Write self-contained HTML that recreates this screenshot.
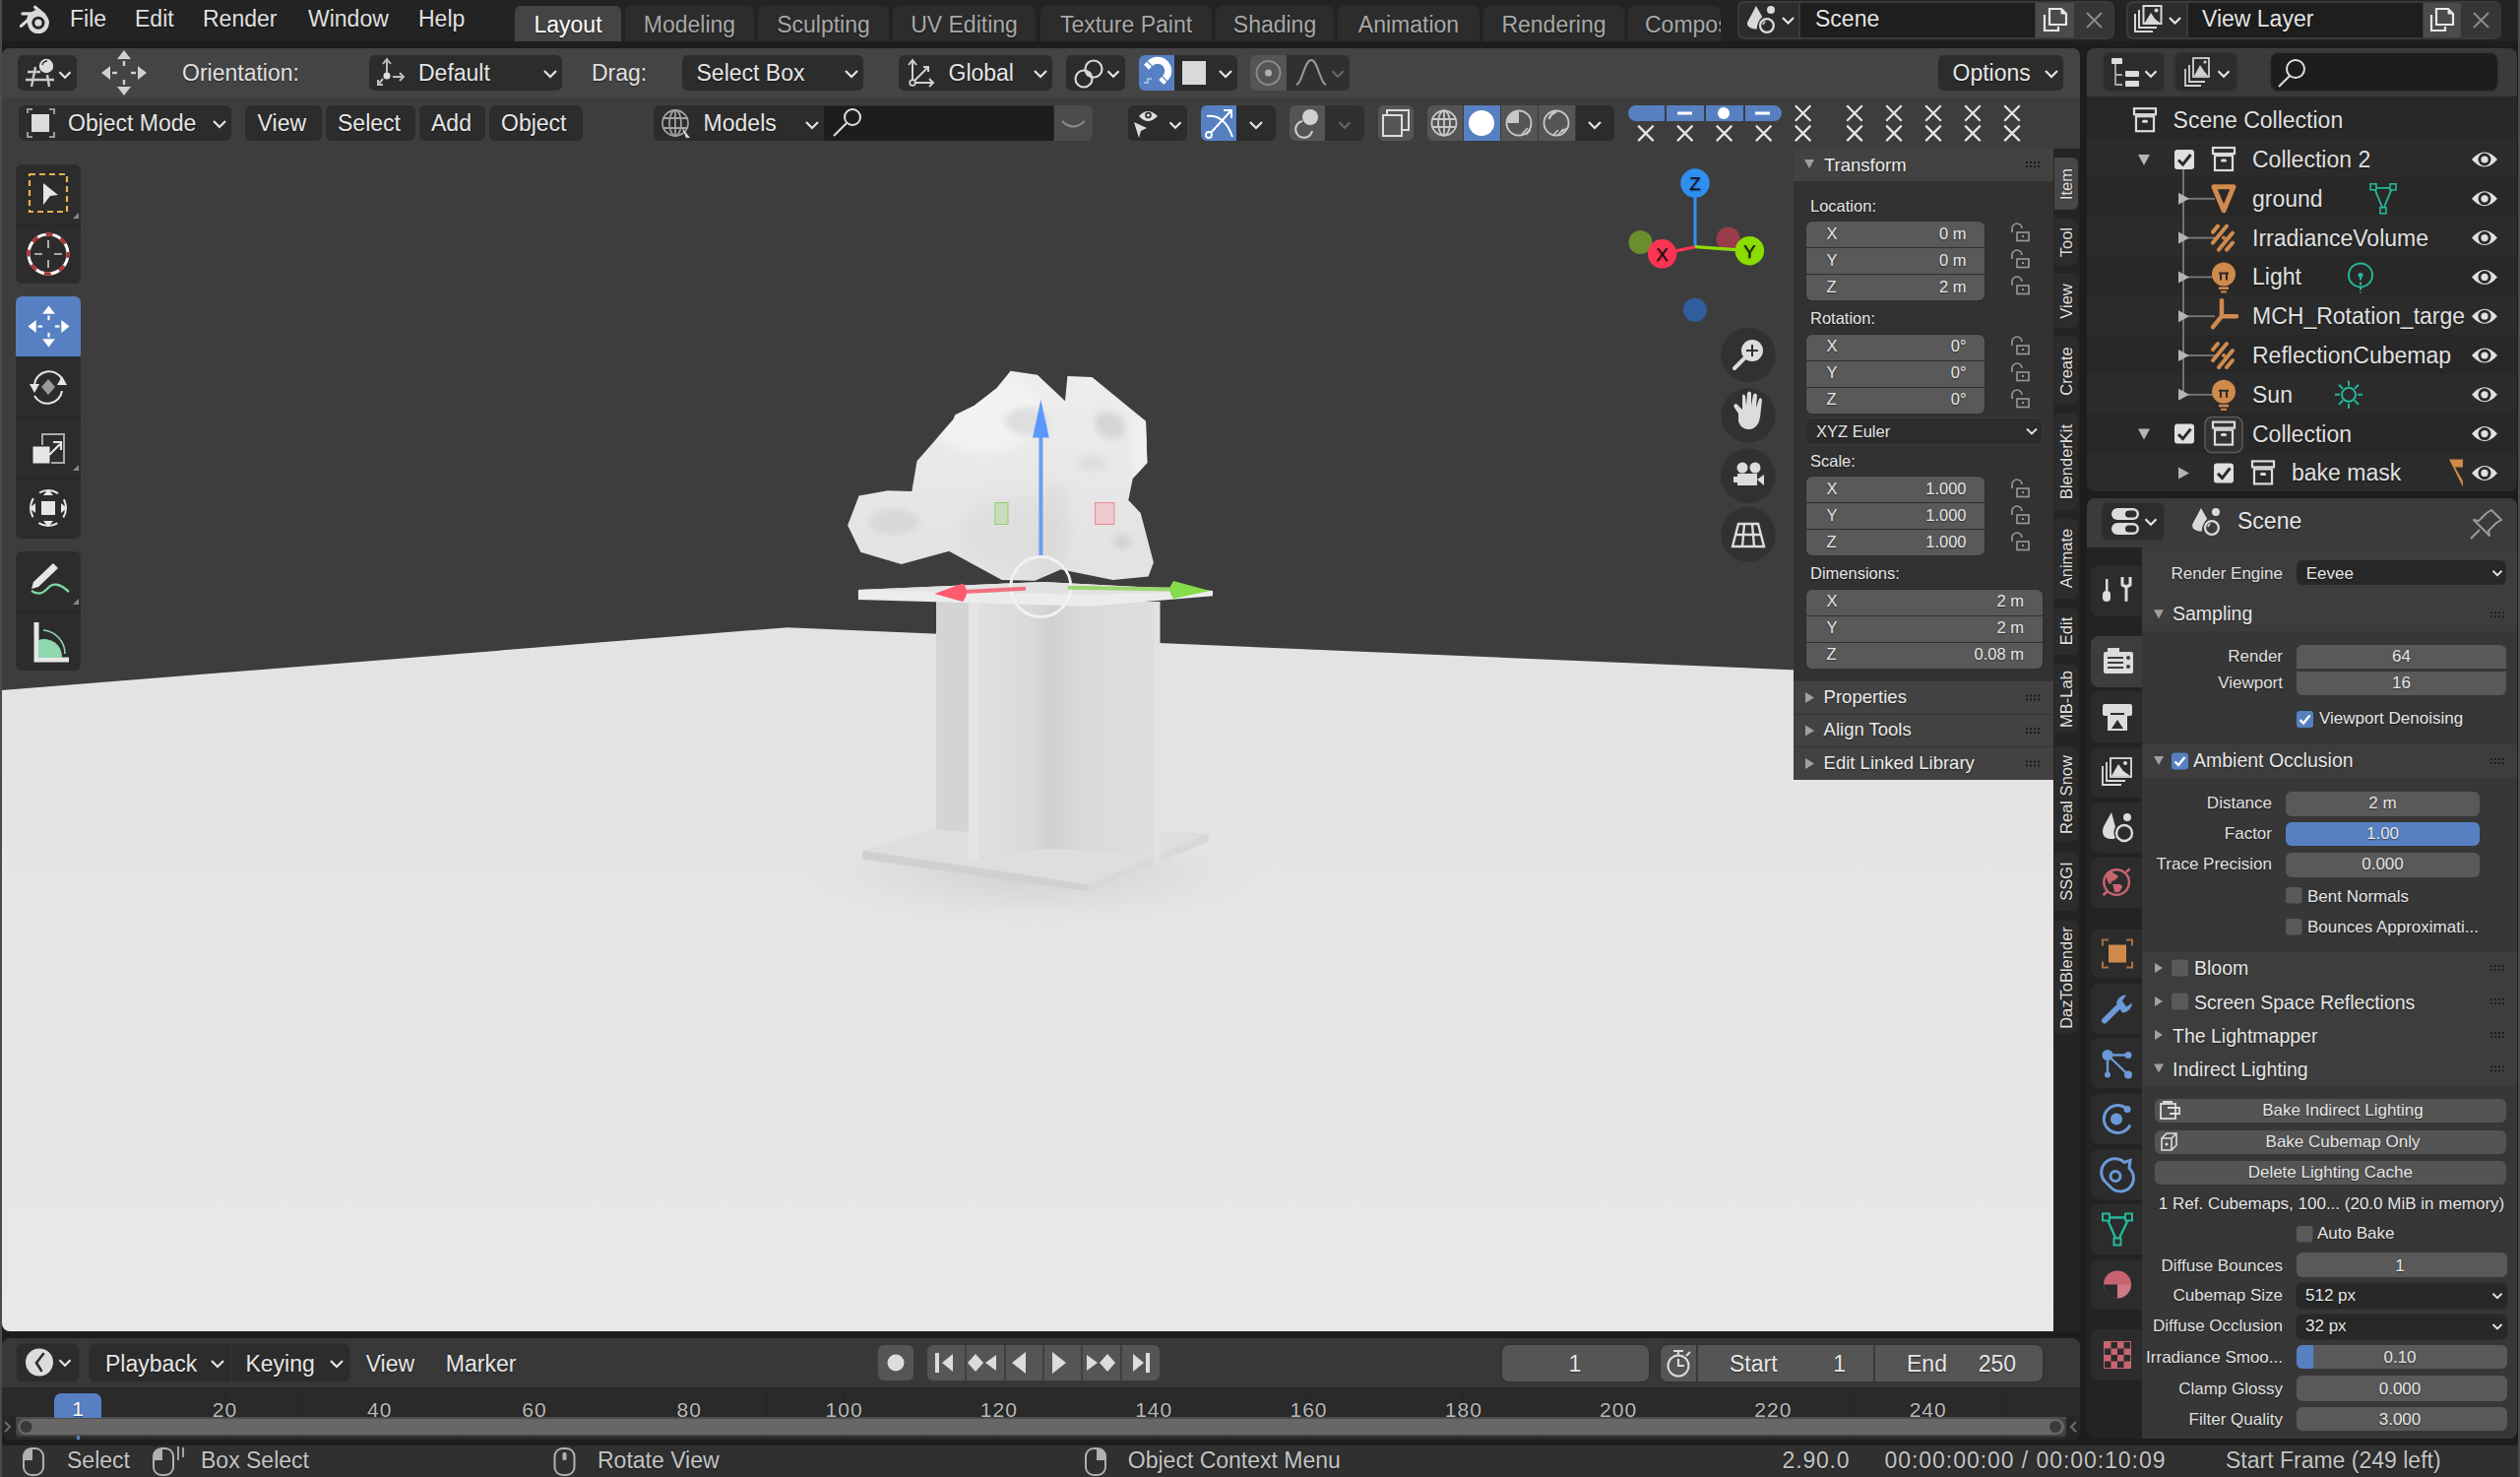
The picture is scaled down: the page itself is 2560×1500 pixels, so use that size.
<!DOCTYPE html>
<html><head><meta charset="utf-8">
<style>
*{box-sizing:border-box;margin:0;padding:0}
html,body{width:2560px;height:1500px;overflow:hidden;background:#1d1d1d;font-family:"Liberation Sans",sans-serif;color:#e6e6e6;position:relative}
.a{position:absolute}
.t{position:absolute;white-space:nowrap;line-height:1;text-shadow:0 1px 1.5px rgba(0,0,0,0.5)}
.area{position:absolute;overflow:hidden;border-radius:8px}
svg.a{overflow:visible}
</style></head><body>

<div class="a" style="left:0.0px;top:0.0px;width:2.0px;height:1500.0px;background:#4b4b4b;"></div>
<div class="a" style="left:2558.0px;top:0.0px;width:2.0px;height:1500.0px;background:#4b4b4b;"></div>
<div class="a" style="left:2.0px;top:0.0px;width:2556.0px;height:42.0px;background:#232323;"></div>
<svg class="a" style="left:0.0px;top:0.0px;" width="60" height="42" viewBox="0 0 60 42"><polygon points="29,14 37,9.5 47,16 50,23 39,23 28,24.5 27,19" fill="#d9d9d9"/><circle cx="38.9" cy="23.2" r="10.9" fill="#d9d9d9"/><circle cx="38.9" cy="23.2" r="6.5" fill="#232323"/><circle cx="38.9" cy="23.2" r="3.6" fill="#d9d9d9"/><line x1="35.6" y1="7.3" x2="45" y2="15" stroke="#d9d9d9" stroke-width="3.2" stroke-linecap="round"/><line x1="22.9" y1="13.9" x2="36" y2="13.9" stroke="#d9d9d9" stroke-width="3.2" stroke-linecap="round"/><line x1="21.4" y1="26.4" x2="30.5" y2="18.5" stroke="#d9d9d9" stroke-width="3.2" stroke-linecap="round"/></svg>
<div class="t" style="top:8.0px;font-size:23px;color:#e0e0e0;left:71.0px;">File</div>
<div class="t" style="top:8.0px;font-size:23px;color:#e0e0e0;left:137.0px;">Edit</div>
<div class="t" style="top:8.0px;font-size:23px;color:#e0e0e0;left:206.0px;">Render</div>
<div class="t" style="top:8.0px;font-size:23px;color:#e0e0e0;left:313.0px;">Window</div>
<div class="t" style="top:8.0px;font-size:23px;color:#e0e0e0;left:425.0px;">Help</div>
<div class="a" style="left:523.0px;top:6.0px;width:108.0px;height:36.0px;background:#444444;border-radius:6px 6px 0 0;"></div>
<div class="t" style="top:14.0px;font-size:23px;color:#ffffff;left:577.0px;transform:translateX(-50%);">Layout</div>
<div class="a" style="left:635.0px;top:6.0px;width:131.0px;height:36.0px;background:#2c2c2c;border-radius:6px 6px 0 0;"></div>
<div class="t" style="top:14.0px;font-size:23px;color:#a8a8a8;left:700.5px;transform:translateX(-50%);">Modeling</div>
<div class="a" style="left:770.0px;top:6.0px;width:133.0px;height:36.0px;background:#2c2c2c;border-radius:6px 6px 0 0;"></div>
<div class="t" style="top:14.0px;font-size:23px;color:#a8a8a8;left:836.5px;transform:translateX(-50%);">Sculpting</div>
<div class="a" style="left:907.0px;top:6.0px;width:145.0px;height:36.0px;background:#2c2c2c;border-radius:6px 6px 0 0;"></div>
<div class="t" style="top:14.0px;font-size:23px;color:#a8a8a8;left:979.5px;transform:translateX(-50%);">UV Editing</div>
<div class="a" style="left:1057.0px;top:6.0px;width:174.0px;height:36.0px;background:#2c2c2c;border-radius:6px 6px 0 0;"></div>
<div class="t" style="top:14.0px;font-size:23px;color:#a8a8a8;left:1144.0px;transform:translateX(-50%);">Texture Paint</div>
<div class="a" style="left:1235.0px;top:6.0px;width:120.0px;height:36.0px;background:#2c2c2c;border-radius:6px 6px 0 0;"></div>
<div class="t" style="top:14.0px;font-size:23px;color:#a8a8a8;left:1295.0px;transform:translateX(-50%);">Shading</div>
<div class="a" style="left:1359.0px;top:6.0px;width:144.0px;height:36.0px;background:#2c2c2c;border-radius:6px 6px 0 0;"></div>
<div class="t" style="top:14.0px;font-size:23px;color:#a8a8a8;left:1431.0px;transform:translateX(-50%);">Animation</div>
<div class="a" style="left:1507.0px;top:6.0px;width:143.0px;height:36.0px;background:#2c2c2c;border-radius:6px 6px 0 0;"></div>
<div class="t" style="top:14.0px;font-size:23px;color:#a8a8a8;left:1578.5px;transform:translateX(-50%);">Rendering</div>
<div class="a" style="left:1654.0px;top:6.0px;width:94.0px;height:36.0px;background:#2c2c2c;border-radius:6px 6px 0 0;"></div>
<div class="a" style="left:1654px;top:6px;width:94px;height:36px;overflow:hidden">
<div class="t" style="top:8.0px;font-size:23px;color:#a8a8a8;left:17.0px;">Compositing</div>
</div>
<div class="a" style="left:1765.0px;top:1.0px;width:383.0px;height:38.5px;background:#3a3a3a;border-radius:7px;"></div>
<div class="a" style="left:1766.5px;top:2.5px;width:60.5px;height:35.5px;background:#2c2c2c;border-radius:6px 0 0 6px;"></div>
<div class="a" style="left:1829.0px;top:2.5px;width:238.0px;height:35.5px;background:#1e1e1e;"></div>
<div class="a" style="left:2068.0px;top:2.5px;width:39.0px;height:35.5px;background:#4b4b4b;"></div>
<div class="a" style="left:2107.0px;top:2.5px;width:39.5px;height:35.5px;background:#363636;border-radius:0 6px 6px 0;"></div>
<svg class="a" style="left:1775.0px;top:6.0px;" width="28" height="28" viewBox="0 0 28 28"><path d="M9,0 L15.2,11 Q10.2,16 9.6,23.8 Q3.5,23.6 0.8,20.5 Q-0.6,18.5 0.4,16 Z" fill="#d9d9d9"/><circle cx="24" cy="4" r="4" fill="#d9d9d9"/><circle cx="19.9" cy="20" r="6.9" fill="none" stroke="#d9d9d9" stroke-width="2.3"/><path d="M16,19 Q16.5,16.5 18.5,16" stroke="#d9d9d9" stroke-width="1.6" fill="none"/></svg>
<svg class="a" style="left:1808.5px;top:16.2px;" width="15" height="9.5" viewBox="0 0 15 9.5"><polyline points="2,2 7.5,7.5 13,2" fill="none" stroke="#e6e6e6" stroke-width="2.2"/></svg>
<div class="t" style="top:7.5px;font-size:23px;color:#e6e6e6;left:1844.0px;">Scene</div>
<svg class="a" style="left:2075.0px;top:7.0px;" width="26" height="26" viewBox="0 0 26 26"><path d="M2,8 L2,24 L16,24 L16,20" fill="none" stroke="#e6e6e6" stroke-width="2.2"/><path d="M7,2 L19,2 L24,7 L24,18 L7,18 Z" fill="none" stroke="#e6e6e6" stroke-width="2.2"/><path d="M19,2 L19,7 L24,7" fill="#e6e6e6" stroke="#e6e6e6" stroke-width="1"/></svg>
<svg class="a" style="left:2119.5px;top:12.5px;" width="15" height="15" viewBox="0 0 15 15"><path d="M0,0 L15,15 M15,0 L0,15" stroke="#8a8a8a" stroke-width="2"/></svg>
<div class="a" style="left:2160.0px;top:1.0px;width:381.0px;height:38.5px;background:#3a3a3a;border-radius:7px;"></div>
<div class="a" style="left:2161.5px;top:2.5px;width:59.5px;height:35.5px;background:#2c2c2c;border-radius:6px 0 0 6px;"></div>
<div class="a" style="left:2223.0px;top:2.5px;width:238.0px;height:35.5px;background:#1e1e1e;"></div>
<div class="a" style="left:2462.0px;top:2.5px;width:38.0px;height:35.5px;background:#4b4b4b;"></div>
<div class="a" style="left:2500.0px;top:2.5px;width:39.5px;height:35.5px;background:#363636;border-radius:0 6px 6px 0;"></div>
<svg class="a" style="left:2168.0px;top:5.0px;" width="30" height="30" viewBox="0 0 30 30"><path d="M1,9 L1,27 L19,27" fill="none" stroke="#d9d9d9" stroke-width="2"/><path d="M5,5 L5,23 L23,23" fill="none" stroke="#d9d9d9" stroke-width="2"/><rect x="9.5" y="1" width="18" height="18" fill="none" stroke="#d9d9d9" stroke-width="2"/><path d="M11,18 L17,8 L21,14 L26,18 Z" fill="#d9d9d9"/><circle cx="22.5" cy="5.5" r="2" fill="#d9d9d9"/></svg>
<svg class="a" style="left:2201.5px;top:16.2px;" width="15" height="9.5" viewBox="0 0 15 9.5"><polyline points="2,2 7.5,7.5 13,2" fill="none" stroke="#e6e6e6" stroke-width="2.2"/></svg>
<div class="t" style="top:7.5px;font-size:23px;color:#e6e6e6;left:2237.0px;">View Layer</div>
<svg class="a" style="left:2468.0px;top:7.0px;" width="26" height="26" viewBox="0 0 26 26"><path d="M2,8 L2,24 L16,24 L16,20" fill="none" stroke="#e6e6e6" stroke-width="2.2"/><path d="M7,2 L19,2 L24,7 L24,18 L7,18 Z" fill="none" stroke="#e6e6e6" stroke-width="2.2"/><path d="M19,2 L19,7 L24,7" fill="#e6e6e6" stroke="#e6e6e6" stroke-width="1"/></svg>
<svg class="a" style="left:2512.5px;top:12.5px;" width="15" height="15" viewBox="0 0 15 15"><path d="M0,0 L15,15 M15,0 L0,15" stroke="#8a8a8a" stroke-width="2"/></svg>
<div class="area" style="left:2px;top:49px;width:2111px;height:1303px;background:#3d3d3d">
<svg class="a" style="left:-2px;top:-49px" width="2560" height="1500" viewBox="0 0 2560 1500">
<defs><linearGradient id="floorg" x1="0" y1="0" x2="0" y2="1"><stop offset="0" stop-color="#e3e3e3"/><stop offset="1" stop-color="#e8e8e8"/></linearGradient><linearGradient id="headg" x1="0" y1="0" x2="0" y2="1"><stop offset="0" stop-color="#eeeeee"/><stop offset="0.55" stop-color="#e7e7e7"/><stop offset="1" stop-color="#e2e2e2"/></linearGradient><linearGradient id="colg" x1="0" y1="0" x2="1" y2="0"><stop offset="0" stop-color="#dcdcdc"/><stop offset="0.3" stop-color="#e6e6e6"/><stop offset="1" stop-color="#e3e3e3"/></linearGradient><radialGradient id="shadowg" cx="0.5" cy="0.5" r="0.5"><stop offset="0" stop-color="#cfcfcf"/><stop offset="0.6" stop-color="#dcdcdc" stop-opacity="0.6"/><stop offset="1" stop-color="#e6e6e6" stop-opacity="0"/></radialGradient></defs>
<polygon points="0,701.2 800,637.2 2120,692.9 2120,1360 0,1360" fill="url(#floorg)"/>
<ellipse cx="1050" cy="885" rx="250" ry="60" fill="url(#shadowg)"/>
<polygon points="876.4,863.7 952.8,840.3 1227.7,845.9 1105.9,898.4" fill="#dedede"/>
<polygon points="876.4,863.7 1105.9,898.4 1105.9,905.0 876.4,872.7" fill="#d0d0d0"/>
<polygon points="1105.9,898.4 1227.7,845.9 1227.7,854.8 1105.9,905.0" fill="#d8d8d8"/>
<defs><linearGradient id="midg" x1="0" y1="0" x2="1" y2="0"><stop offset="0" stop-color="#e0e0e0"/><stop offset="0.75" stop-color="#d9d9d9"/><stop offset="1" stop-color="#d0d0d0"/></linearGradient><linearGradient id="rightg" x1="0" y1="0" x2="1" y2="0"><stop offset="0" stop-color="#d0d0d0"/><stop offset="0.3" stop-color="#dadada"/><stop offset="1" stop-color="#dedede"/></linearGradient></defs>
<polygon points="951.0,611.0 985.2,611.0 985.2,845.0 951.0,842.5" fill="#d4d4d4"/>
<polygon points="1066.8,611.0 1174.0,611.0 1174.0,867.0 1066.8,862.0" fill="url(#rightg)"/>
<polygon points="994.0,612.0 1068.0,612.0 1068.0,862.0 994.0,866.0" fill="url(#midg)"/>
<polygon points="984.0,612.0 994.0,612.0 994.0,873.8 984.0,872.0" fill="#e4e4e4"/>
<polygon points="1171.8,611.0 1178.5,611.0 1178.5,878.0 1171.8,876.0" fill="#e2e2e2"/>
<polygon points="871.9,599.0 1060.0,591.0 1232.0,600.0 1232.0,605.2 1107.0,615.7 871.9,609.0" fill="#ececec"/>
<polygon points="871.9,599.0 1060.0,591.0 1232.0,600.0 1107.0,604.0" fill="#e2e2e2"/>
<polygon points="1026.6,376.7 1053.9,380.8 1082.0,407.2 1084.4,382.0 1109.4,382.9 1164.0,427.8 1165.4,470.0 1150.7,485.9 1146.3,507.9 1158.7,521.0 1171.9,571.3 1166.6,585.4 1130.5,588.9 1077.7,578.3 1051.3,589.8 1017.8,588.9 964.1,559.8 915.7,573.0 874.3,560.7 861.1,533.4 872.6,503.5 901.6,498.2 926.3,499.1 931.5,468.3 968.5,426.0 970.3,421.6 989.6,411.9 1012.5,394.3" fill="url(#headg)"/>
<defs><filter id="bl6" x="-50%" y="-50%" width="200%" height="200%"><feGaussianBlur stdDeviation="6"/></filter><filter id="bl3" x="-50%" y="-50%" width="200%" height="200%"><feGaussianBlur stdDeviation="3"/></filter><clipPath id="headclip"><polygon points="1026.6,376.7 1053.9,380.8 1082.0,407.2 1084.4,382.0 1109.4,382.9 1164.0,427.8 1165.4,470.0 1150.7,485.9 1146.3,507.9 1158.7,521.0 1171.9,571.3 1166.6,585.4 1130.5,588.9 1077.7,578.3 1051.3,589.8 1017.8,588.9 964.1,559.8 915.7,573.0 874.3,560.7 861.1,533.4 872.6,503.5 901.6,498.2 926.3,499.1 931.5,468.3 968.5,426.0 970.3,421.6 989.6,411.9 1012.5,394.3"/></clipPath></defs>
<g clip-path="url(#headclip)">
<ellipse cx="1000" cy="420" rx="60" ry="40" fill="#f2f2f2" filter="url(#bl6)"/>
<ellipse cx="1030" cy="540" rx="55" ry="35" fill="#dadada" filter="url(#bl6)" opacity="0.5"/>
<ellipse cx="908" cy="530" rx="26" ry="13" fill="#d8d8d8" filter="url(#bl3)"/>
<ellipse cx="1044" cy="428" rx="23" ry="14" fill="#dedede" filter="url(#bl3)"/>
<ellipse cx="1128" cy="432" rx="17" ry="13" transform="rotate(30 1128 432)" fill="#d6d6d6" filter="url(#bl3)"/>
<ellipse cx="1140" cy="550" rx="9" ry="7" fill="#d0d0d0" filter="url(#bl3)"/>
<path d="M1062,490 L1085,500 L1082,590 L1050,590 Z" fill="#d8d8d8" filter="url(#bl6)" opacity="0.6"/>
<ellipse cx="1110" cy="470" rx="15" ry="8" fill="#dedede" filter="url(#bl3)"/>
<path d="M1150,420 L1170,430 L1170,480 L1150,490 Z" fill="#f0f0f0" filter="url(#bl3)"/>
</g>
<rect x="1010.8" y="510.5" width="13.2" height="22" fill="#b8dca0" fill-opacity="0.6" stroke="#8fd06a" stroke-width="1"/>
<rect x="1112.5" y="510.5" width="19.4" height="22" fill="#f0b8bc" fill-opacity="0.6" stroke="#f08a95" stroke-width="1"/>
<line x1="1057.4" y1="444" x2="1057.4" y2="565" stroke="#6f9cf0" stroke-width="4"/>
<polygon points="1057.4,406 1065.8,444.5 1049,444.5" fill="#5a97ff"/>
<circle cx="1057.3" cy="596" r="30.5" fill="none" stroke="#f2f2f2" stroke-width="2.8"/>
<line x1="1041.9" y1="597.7" x2="975" y2="601.2" stroke="#f0707c" stroke-width="4"/>
<path d="M949.2,603 L978,592.4 Q986,601 978,610.9 Z" fill="#ff5a6e"/>
<line x1="1084.7" y1="596.8" x2="1195" y2="598.4" stroke="#9ad870" stroke-width="4"/>
<path d="M1229,600 L1192,590 Q1185,599 1192,608 Z" fill="#86dc4a"/>
</svg>
</div>
<div class="a" style="left:2px;top:49px;width:2111px;height:49.5px;background:#444444;border-radius:8px 8px 0 0"></div>
<div class="a" style="left:18.0px;top:56.0px;width:60.0px;height:36.0px;background:#2c2c2c;border-radius:6px;"></div>
<svg class="a" style="left:0;top:0;pointer-events:none" width="2560" height="1500"><g stroke="#c8c8c8" stroke-width="2.4" fill="none"><path d="M28,73 L41,73 M26,81 L55,81 M36,68 L32,88 M48,76 L50,88"/></g><circle cx="47" cy="67" r="7.2" fill="#dcdcdc"/><path d="M43,66 Q44,62 48,62" stroke="#2c2c2c" stroke-width="1.4" fill="none"/><polyline points="60.5,73.25 66,78.75 71.5,73.25" fill="none" stroke="#e6e6e6" stroke-width="2.2"/></svg>
<svg class="a" style="left:0;top:0" width="2560" height="1500"><polygon points="126,51.0 133.0,60.0 119.0,60.0" fill="#d0d0d0"/><polygon points="126,97.0 133.0,88.0 119.0,88.0" fill="#d0d0d0"/><polygon points="103.0,74 112.0,67.0 112.0,81.0" fill="#d0d0d0"/><polygon points="149.0,74 140.0,67.0 140.0,81.0" fill="#d0d0d0"/><rect x="124.8" y="62.0" width="2.4" height="5.0" fill="#d0d0d0"/><rect x="124.8" y="81.0" width="2.4" height="5.0" fill="#d0d0d0"/><rect x="114.0" y="72.8" width="5.0" height="2.4" fill="#d0d0d0"/><rect x="133.0" y="72.8" width="5.0" height="2.4" fill="#d0d0d0"/></svg>
<div class="t" style="top:62.5px;font-size:23px;color:#e0e0e0;left:185.0px;">Orientation:</div>
<div class="a" style="left:375.0px;top:56.0px;width:196.0px;height:35.5px;background:#2c2c2c;border-radius:6px;"></div>
<div class="t" style="top:62.5px;font-size:23px;color:#e6e6e6;left:425.0px;">Default</div>
<div class="t" style="top:62.5px;font-size:23px;color:#e0e0e0;left:601.0px;">Drag:</div>
<div class="a" style="left:693.0px;top:56.0px;width:184.0px;height:35.5px;background:#2c2c2c;border-radius:6px;"></div>
<div class="t" style="top:62.5px;font-size:23px;color:#e6e6e6;left:707.5px;">Select Box</div>
<div class="a" style="left:913.0px;top:56.0px;width:156.0px;height:35.5px;background:#2c2c2c;border-radius:6px;"></div>
<div class="t" style="top:62.5px;font-size:23px;color:#e6e6e6;left:963.5px;">Global</div>
<div class="a" style="left:1083.0px;top:56.0px;width:60.0px;height:35.5px;background:#2c2c2c;border-radius:6px;"></div>
<div class="a" style="left:1157.0px;top:56.0px;width:100.0px;height:35.5px;background:#2c2c2c;border-radius:6px;"></div>
<div class="a" style="left:1157.0px;top:56.0px;width:36.0px;height:35.5px;background:#5680c2;border-radius:6px 0 0 6px;"></div>
<div class="a" style="left:1201.0px;top:62.0px;width:24.0px;height:24.0px;background:#d9d9d9;"></div>
<div class="a" style="left:1270.0px;top:56.0px;width:101.0px;height:35.5px;background:#303030;border-radius:6px;"></div>
<div class="a" style="left:1270.0px;top:56.0px;width:37.0px;height:35.5px;background:#555555;border-radius:6px 0 0 6px;"></div>
<div class="a" style="left:1969.0px;top:56.0px;width:127.0px;height:35.5px;background:#2c2c2c;border-radius:6px;"></div>
<div class="t" style="top:62.5px;font-size:23px;color:#e6e6e6;left:1983.5px;">Options</div>
<svg class="a" style="left:0;top:0;pointer-events:none" width="2560" height="1500"><g stroke="#bdbdbd" stroke-width="2" fill="none"><path d="M393,76 L393,61 M389,65 L393,60 L397,65 M399,78 L410,78 M406,74 L410,78 L406,82 M389,80 L384,86 M384,81 L384,86 L389,86"/></g><circle cx="393" cy="77" r="3.5" fill="#e0e0e0"/><polyline points="553.0,72.0 559,78.0 565.0,72.0" fill="none" stroke="#e6e6e6" stroke-width="2.2"/><polyline points="859.0,72.0 865,78.0 871.0,72.0" fill="none" stroke="#e6e6e6" stroke-width="2.2"/><g stroke="#d0d0d0" stroke-width="2" fill="none"><path d="M927,84 L927,62 M923,66 L927,61 L931,66 M927,84 L948,84 M944,80 L948,84 L944,88 M929,82 L943,68 M938,68 L943,68 L943,73"/></g><circle cx="927" cy="84" r="2.8" fill="#2c2c2c" stroke="#d0d0d0" stroke-width="1.8"/><polyline points="1051.0,72.0 1057,78.0 1063.0,72.0" fill="none" stroke="#e6e6e6" stroke-width="2.2"/><circle cx="1101" cy="80" r="8.5" fill="none" stroke="#d8d8d8" stroke-width="2.2"/><circle cx="1111" cy="70" r="8.5" fill="none" stroke="#d8d8d8" stroke-width="2.2"/><circle cx="1106" cy="75" r="2.6" fill="#d8d8d8"/><polyline points="1125.5,72.25 1131,77.75 1136.5,72.25" fill="none" stroke="#e6e6e6" stroke-width="2.2"/><path d="M1168.4,64.4 A10.5,10.5 0 0 1 1183.6,79.6" stroke="#ffffff" stroke-width="7" fill="none"/><path d="M1168.4,64.4 L1164.5,68.3 M1183.6,79.6 L1179.7,83.5" stroke="#ffffff" stroke-width="7" stroke-dasharray="0.1,1.2,20"/><path d="M1162,84 L1166,84 L1166,80 L1170,80" stroke="#b8c8e8" stroke-width="1.6" fill="none"/><polyline points="1239.0,72.0 1245,78.0 1251.0,72.0" fill="none" stroke="#e6e6e6" stroke-width="2.2"/><circle cx="1288.5" cy="74" r="12" fill="none" stroke="#8a8a8a" stroke-width="2"/><circle cx="1288.5" cy="74" r="3.5" fill="#b0b0b0"/><path d="M1317,86 C1323,85 1325,61 1332,61 C1339,61 1341,85 1347,86" stroke="#9a9a9a" stroke-width="2" fill="none"/><polyline points="1353.5,72.25 1359,77.75 1364.5,72.25" fill="none" stroke="#6a6a6a" stroke-width="2.2"/><polyline points="2078.0,72.0 2084,78.0 2090.0,72.0" fill="none" stroke="#e6e6e6" stroke-width="2.2"/></svg>
<div class="a" style="left:19.0px;top:107.0px;width:216.0px;height:36.0px;background:#2c2c2c;border-radius:6px;"></div>
<div class="t" style="top:113.5px;font-size:23px;color:#e6e6e6;left:69.0px;">Object Mode</div>
<div class="a" style="left:249.0px;top:107.0px;width:78.0px;height:36.0px;background:#2c2c2c;border-radius:6px;"></div>
<div class="t" style="top:113.5px;font-size:23px;color:#e6e6e6;left:261.6px;">View</div>
<div class="a" style="left:331.0px;top:107.0px;width:91.0px;height:36.0px;background:#2c2c2c;border-radius:6px;"></div>
<div class="t" style="top:113.5px;font-size:23px;color:#e6e6e6;left:343.0px;">Select</div>
<div class="a" style="left:426.0px;top:107.0px;width:67.0px;height:36.0px;background:#2c2c2c;border-radius:6px;"></div>
<div class="t" style="top:113.5px;font-size:23px;color:#e6e6e6;left:438.0px;">Add</div>
<div class="a" style="left:497.0px;top:107.0px;width:95.0px;height:36.0px;background:#2c2c2c;border-radius:6px;"></div>
<div class="t" style="top:113.5px;font-size:23px;color:#e6e6e6;left:509.0px;">Object</div>
<div class="a" style="left:664.0px;top:107.0px;width:446.0px;height:36.0px;background:#2c2c2c;border-radius:6px;"></div>
<div class="a" style="left:837.0px;top:107.5px;width:233.0px;height:35.0px;background:#1d1d1d;"></div>
<div class="a" style="left:1071.0px;top:107.0px;width:39.0px;height:36.0px;background:#4b4b4b;border-radius:0 6px 6px 0;"></div>
<div class="t" style="top:113.5px;font-size:23px;color:#e6e6e6;left:714.6px;">Models</div>
<div class="a" style="left:1146.0px;top:107.0px;width:60.0px;height:36.0px;background:#2c2c2c;border-radius:6px;"></div>
<div class="a" style="left:1220.0px;top:107.0px;width:76.0px;height:36.0px;background:#2c2c2c;border-radius:6px;"></div>
<div class="a" style="left:1220.0px;top:107.0px;width:36.0px;height:36.0px;background:#5680c2;border-radius:6px 0 0 6px;"></div>
<div class="a" style="left:1310.0px;top:107.0px;width:76.0px;height:36.0px;background:#303030;border-radius:6px;"></div>
<div class="a" style="left:1310.0px;top:107.0px;width:36.0px;height:36.0px;background:#555555;border-radius:6px 0 0 6px;"></div>
<div class="a" style="left:1400.0px;top:107.0px;width:36.0px;height:36.0px;background:#555555;border-radius:6px;"></div>
<div class="a" style="left:1450.0px;top:107.0px;width:190.0px;height:36.0px;background:#2c2c2c;border-radius:6px;"></div>
<div class="a" style="left:1450.0px;top:107.0px;width:36.0px;height:36.0px;background:#555555;border-radius:6px 0 0 6px;"></div>
<div class="a" style="left:1486.0px;top:107.0px;width:38.0px;height:36.0px;background:#5680c2;"></div>
<div class="a" style="left:1524.0px;top:107.0px;width:38.0px;height:36.0px;background:#555555;"></div>
<div class="a" style="left:1562.0px;top:107.0px;width:38.0px;height:36.0px;background:#555555;"></div>
<div class="a" style="left:1486.0px;top:107.0px;width:1.0px;height:36.0px;background:#3a3a3a;"></div>
<div class="a" style="left:1524.0px;top:107.0px;width:1.0px;height:36.0px;background:#3a3a3a;"></div>
<div class="a" style="left:1562.0px;top:107.0px;width:1.0px;height:36.0px;background:#3a3a3a;"></div>
<div class="a" style="left:1600.0px;top:107.0px;width:1.0px;height:36.0px;background:#3a3a3a;"></div>
<div class="a" style="left:1654.0px;top:107.0px;width:156.0px;height:16.0px;background:#5680c2;border-radius:8px;"></div>
<div class="a" style="left:1690.5px;top:107.0px;width:2.0px;height:16.0px;background:#3d3d3d;"></div>
<div class="a" style="left:1730.5px;top:107.0px;width:2.0px;height:16.0px;background:#3d3d3d;"></div>
<div class="a" style="left:1770.5px;top:107.0px;width:2.0px;height:16.0px;background:#3d3d3d;"></div>
<svg class="a" style="left:0;top:0;pointer-events:none" width="2560" height="1500"><g stroke="#9a9a9a" stroke-width="2" fill="none"><path d="M28,115 L28,111 L33,111 M50,111 L55,111 L55,116 M55,134 L55,139 L50,139 M33,139 L28,139 L28,134"/></g><rect x="32" y="116" width="18" height="18" fill="#dcdcdc"/><polyline points="217.0,123.0 223,129.0 229.0,123.0" fill="none" stroke="#e6e6e6" stroke-width="2.2"/><g stroke="#a0a0a0" stroke-width="1.8" fill="none"><circle cx="686" cy="125" r="13"/><ellipse cx="686" cy="125" rx="6" ry="13"/><path d="M673,120 L699,120 M673,130 L699,130 M686,112 L686,138"/></g><path d="M692,128 L701,140 L697,140 L699,145 Z" fill="#d0d0d0"/><polyline points="819.0,124.0 825,130.0 831.0,124.0" fill="none" stroke="#e6e6e6" stroke-width="2.2"/><circle cx="866" cy="119" r="8" fill="none" stroke="#e0e0e0" stroke-width="2"/><line x1="860" y1="125" x2="847" y2="138" stroke="#e0e0e0" stroke-width="2"/><path d="M1079,123 Q1090,134 1102,123" stroke="#8c8c8c" stroke-width="2" fill="none"/><path d="M1157,118 Q1166,108 1176,118 Q1166,128 1157,118 Z" fill="#dcdcdc"/><circle cx="1166.5" cy="117" r="3.3" fill="#2c2c2c"/><circle cx="1166.5" cy="117" r="1.6" fill="#dcdcdc"/><path d="M1152,124 L1165,130 L1159,133 L1157,140 Z" fill="#dcdcdc"/><polyline points="1188.5,124.25 1194,129.75 1199.5,124.25" fill="none" stroke="#e6e6e6" stroke-width="2.2"/><path d="M1226,118 Q1244,116 1252,139" stroke="#ffffff" stroke-width="2" fill="none"/><line x1="1229" y1="136" x2="1250" y2="113" stroke="#fff" stroke-width="2"/><path d="M1243,112 L1251,112 L1251,120" stroke="#fff" stroke-width="2" fill="none"/><circle cx="1228" cy="137" r="3" fill="#5680c2" stroke="#fff" stroke-width="1.8"/><polyline points="1270.0,124.0 1276,130.0 1282.0,124.0" fill="none" stroke="#e6e6e6" stroke-width="2.2"/><circle cx="1331" cy="119" r="8" fill="#d0d0d0"/><path d="M1323,123 A8.5,8.5 0 1 0 1333,133" stroke="#d0d0d0" stroke-width="2" fill="none"/><polyline points="1360.5,124.25 1366,129.75 1371.5,124.25" fill="none" stroke="#666666" stroke-width="2.2"/><rect x="1405" y="117" width="19" height="21" fill="none" stroke="#dcdcdc" stroke-width="2"/><path d="M1409,117 L1409,112 L1431,112 L1431,132 L1424,132" fill="none" stroke="#dcdcdc" stroke-width="2"/><g stroke="#c8c8c8" stroke-width="1.8" fill="none"><circle cx="1467" cy="125" r="12.5"/><ellipse cx="1467" cy="125" rx="6" ry="12.5"/><path d="M1455,121 L1479,121 M1455,129 L1479,129 M1467,112 L1467,138"/></g><circle cx="1505" cy="125" r="13" fill="#ffffff"/><circle cx="1543" cy="125" r="12.5" fill="none" stroke="#c8c8c8" stroke-width="1.8"/><path d="M1543,113 A12,12 0 0 0 1531,125 L1543,125 Z" fill="#c8c8c8"/><path d="M1546,136 L1552,130 M1550,137 L1555,132" stroke="#c8c8c8" stroke-width="1.6"/><circle cx="1581" cy="125" r="12.5" fill="none" stroke="#c8c8c8" stroke-width="1.8"/><path d="M1574,120 Q1576,115 1580,114" stroke="#c8c8c8" stroke-width="2.4" fill="none" stroke-linecap="round"/><path d="M1578,137 L1583,132 M1583,137 L1588,131 M1587,134 L1591,130" stroke="#c8c8c8" stroke-width="1.6"/><polyline points="1614.0,124.0 1620,130.0 1626.0,124.0" fill="none" stroke="#e6e6e6" stroke-width="2.2"/><rect x="1704" y="113.5" width="15" height="3" fill="#fff"/><circle cx="1751" cy="115" r="6" fill="#fff"/><rect x="1783" y="113.5" width="15" height="3" fill="#fff"/><path d="M1823.85,107.25 L1839.35,122.75 M1839.35,107.25 L1823.85,122.75" stroke="#e6e6e6" stroke-width="2.2"/><path d="M1876.25,107.25 L1891.75,122.75 M1891.75,107.25 L1876.25,122.75" stroke="#e6e6e6" stroke-width="2.2"/><path d="M1916.25,107.25 L1931.75,122.75 M1931.75,107.25 L1916.25,122.75" stroke="#e6e6e6" stroke-width="2.2"/><path d="M1956.25,107.25 L1971.75,122.75 M1971.75,107.25 L1956.25,122.75" stroke="#e6e6e6" stroke-width="2.2"/><path d="M1996.25,107.25 L2011.75,122.75 M2011.75,107.25 L1996.25,122.75" stroke="#e6e6e6" stroke-width="2.2"/><path d="M2036.25,107.25 L2051.75,122.75 M2051.75,107.25 L2036.25,122.75" stroke="#e6e6e6" stroke-width="2.2"/><path d="M1664.15,127.65 L1679.65,143.15 M1679.65,127.65 L1664.15,143.15" stroke="#e6e6e6" stroke-width="2.2"/><path d="M1703.95,127.65 L1719.45,143.15 M1719.45,127.65 L1703.95,143.15" stroke="#e6e6e6" stroke-width="2.2"/><path d="M1743.85,127.65 L1759.35,143.15 M1759.35,127.65 L1743.85,143.15" stroke="#e6e6e6" stroke-width="2.2"/><path d="M1783.95,127.65 L1799.45,143.15 M1799.45,127.65 L1783.95,143.15" stroke="#e6e6e6" stroke-width="2.2"/><path d="M1823.85,127.65 L1839.35,143.15 M1839.35,127.65 L1823.85,143.15" stroke="#e6e6e6" stroke-width="2.2"/><path d="M1876.25,127.65 L1891.75,143.15 M1891.75,127.65 L1876.25,143.15" stroke="#e6e6e6" stroke-width="2.2"/><path d="M1916.25,127.65 L1931.75,143.15 M1931.75,127.65 L1916.25,143.15" stroke="#e6e6e6" stroke-width="2.2"/><path d="M1956.25,127.65 L1971.75,143.15 M1971.75,127.65 L1956.25,143.15" stroke="#e6e6e6" stroke-width="2.2"/><path d="M1996.25,127.65 L2011.75,143.15 M2011.75,127.65 L1996.25,143.15" stroke="#e6e6e6" stroke-width="2.2"/><path d="M2036.25,127.65 L2051.75,143.15 M2051.75,127.65 L2036.25,143.15" stroke="#e6e6e6" stroke-width="2.2"/></svg>
<div class="a" style="left:16.0px;top:167.0px;width:66.0px;height:121.0px;background:#2c2c2c;border-radius:6px;"></div>
<div class="a" style="left:16.0px;top:301.0px;width:66.0px;height:246.0px;background:#2c2c2c;border-radius:6px;"></div>
<div class="a" style="left:16.0px;top:560.0px;width:66.0px;height:121.0px;background:#2c2c2c;border-radius:6px;"></div>
<div class="a" style="left:16.0px;top:301.0px;width:66.0px;height:61.0px;background:#5680c2;border-radius:6px 6px 0 0;"></div>
<div class="a" style="left:16.0px;top:227.5px;width:66.0px;height:1.5px;background:#262626;"></div>
<div class="a" style="left:16.0px;top:423.0px;width:66.0px;height:1.5px;background:#262626;"></div>
<div class="a" style="left:16.0px;top:485.0px;width:66.0px;height:1.5px;background:#262626;"></div>
<div class="a" style="left:16.0px;top:620.5px;width:66.0px;height:1.5px;background:#262626;"></div>
<svg class="a" style="left:0;top:0;pointer-events:none" width="2560" height="1500"><rect x="30" y="177" width="38" height="38" fill="none" stroke="#e8b050" stroke-width="2.2" stroke-dasharray="6,4"/><path d="M44,186 L59,198 L51,199 L44,208 Z" fill="#e6e6e6"/><path d="M74,222 L80,216 L80,222 Z" fill="#8a8a8a"/><circle cx="49" cy="258" r="20" fill="none" stroke="#ffffff" stroke-width="3"/><circle cx="49" cy="258" r="20" fill="none" stroke="#b03030" stroke-width="3.2" stroke-dasharray="7,8.7" stroke-dashoffset="3"/><path d="M49,244 L49,252 M49,264 L49,272 M35,258 L43,258 M55,258 L63,258" stroke="#cfcfcf" stroke-width="1.6"/></svg>
<svg class="a" style="left:0;top:0" width="2560" height="1500"><polygon points="49.5,310.5 55.891304347826086,318.7173913043478 43.108695652173914,318.7173913043478" fill="#ffffff"/><polygon points="49.5,352.5 55.891304347826086,344.2826086956522 43.108695652173914,344.2826086956522" fill="#ffffff"/><polygon points="28.5,331.5 36.71739130434783,325.10869565217394 36.71739130434783,337.89130434782606" fill="#ffffff"/><polygon points="70.5,331.5 62.28260869565217,325.10869565217394 62.28260869565217,337.89130434782606" fill="#ffffff"/><rect x="48.404347826086955" y="320.54347826086956" width="2.1913043478260867" height="4.565217391304348" fill="#ffffff"/><rect x="48.404347826086955" y="337.89130434782606" width="2.1913043478260867" height="4.565217391304348" fill="#ffffff"/><rect x="38.54347826086956" y="330.40434782608696" width="4.565217391304348" height="2.1913043478260867" fill="#ffffff"/><rect x="55.891304347826086" y="330.40434782608696" width="4.565217391304348" height="2.1913043478260867" fill="#ffffff"/></svg>
<svg class="a" style="left:0;top:0;pointer-events:none" width="2560" height="1500"><path d="M35,390 A15,15 0 0 1 63,385" stroke="#e6e6e6" stroke-width="2" fill="none"/><path d="M63,397 A15,15 0 0 1 35,402" stroke="#e6e6e6" stroke-width="2" fill="none"/><polygon points="30,390 40,390 35,399" fill="#e6e6e6"/><polygon points="58,391 68,391 63,382" fill="#e6e6e6"/><polygon points="49,385 56,393 49,401 42,393" fill="#9a9a9a"/><rect x="33.5" y="453.5" width="17" height="17" fill="#e6e6e6"/><path d="M43,452 L43,441 L65,441 L65,470 L52,470" stroke="#aaaaaa" stroke-width="2" fill="none"/><path d="M50,462 L61,451 M54,449 L62,449 L62,457" stroke="#e6e6e6" stroke-width="2.2" fill="none"/><path d="M74,478 L80,472 L80,478 Z" fill="#8a8a8a"/><circle cx="49" cy="516" r="18" fill="none" stroke="#e6e6e6" stroke-width="2" stroke-dasharray="20,8.3" stroke-dashoffset="10"/><rect x="42" y="509" width="14" height="14" fill="#e6e6e6"/><polygon points="49,497 54,503 44,503" fill="#e6e6e6"/><polygon points="49,535 54,529 44,529" fill="#e6e6e6"/><polygon points="30,516 36,511 36,521" fill="#e6e6e6"/><polygon points="68,516 62,511 62,521" fill="#e6e6e6"/><path d="M34,591 L54,572 L59,577 L39,596 L32,598 Z" fill="#e6e6e6"/><path d="M32,600 Q40,606 48,598 Q56,588 70,601" stroke="#7dd3a0" stroke-width="2.4" fill="none"/><path d="M74,614 L80,608 L80,614 Z" fill="#8a8a8a"/><path d="M37,632 L37,670 L70,670" stroke="#e6e6e6" stroke-width="5" fill="none"/><path d="M39,650 A18,18 0 0 1 63,668 L39,668 Z" fill="#8fd8b0"/><path d="M44,640 A24,24 0 0 1 66,664" stroke="#8fd8b0" stroke-width="1.6" fill="none"/></svg>
<div class="a" style="left:1822.0px;top:151.0px;width:264.0px;height:641.0px;background:#363636;"></div>
<div class="a" style="left:1822.0px;top:151.0px;width:264.0px;height:540.0px;background:#323232;"></div>
<div class="a" style="left:1822.0px;top:151.0px;width:264.0px;height:33.0px;background:#424242;"></div>
<div class="t" style="top:158.6px;font-size:18.5px;color:#ececec;left:1853.0px;">Transform</div>
<div class="t" style="top:200.6px;font-size:16.5px;color:#e6e6e6;left:1839.0px;">Location:</div>
<div class="a" style="left:1834.0px;top:224.0px;width:183.0px;height:82.0px;background:#2e2e2e;border-radius:7px;"></div>
<div class="a" style="left:1835.0px;top:225.0px;width:181.0px;height:26.0px;background:#595959;border-radius:6px 6px 0 0;"></div>
<div class="t" style="top:228.5px;font-size:16.5px;color:#e6e6e6;left:1855.4px;">X</div>
<div class="t" style="top:228.5px;font-size:16.5px;color:#e6e6e6;right:calc(100% - 1997.5px);">0 m</div>
<div class="a" style="left:1835.0px;top:252.0px;width:181.0px;height:26.0px;background:#595959;"></div>
<div class="t" style="top:255.5px;font-size:16.5px;color:#e6e6e6;left:1855.4px;">Y</div>
<div class="t" style="top:255.5px;font-size:16.5px;color:#e6e6e6;right:calc(100% - 1997.5px);">0 m</div>
<div class="a" style="left:1835.0px;top:279.0px;width:181.0px;height:26.0px;background:#595959;border-radius:0 0 6px 6px;"></div>
<div class="t" style="top:282.5px;font-size:16.5px;color:#e6e6e6;left:1855.4px;">Z</div>
<div class="t" style="top:282.5px;font-size:16.5px;color:#e6e6e6;right:calc(100% - 1997.5px);">2 m</div>
<div class="t" style="top:314.9px;font-size:16.5px;color:#e6e6e6;left:1839.0px;">Rotation:</div>
<div class="a" style="left:1834.0px;top:338.5px;width:183.0px;height:82.0px;background:#2e2e2e;border-radius:7px;"></div>
<div class="a" style="left:1835.0px;top:339.5px;width:181.0px;height:26.0px;background:#595959;border-radius:6px 6px 0 0;"></div>
<div class="t" style="top:343.0px;font-size:16.5px;color:#e6e6e6;left:1855.4px;">X</div>
<div class="t" style="top:343.0px;font-size:16.5px;color:#e6e6e6;right:calc(100% - 1997.5px);">0°</div>
<div class="a" style="left:1835.0px;top:366.5px;width:181.0px;height:26.0px;background:#595959;"></div>
<div class="t" style="top:370.0px;font-size:16.5px;color:#e6e6e6;left:1855.4px;">Y</div>
<div class="t" style="top:370.0px;font-size:16.5px;color:#e6e6e6;right:calc(100% - 1997.5px);">0°</div>
<div class="a" style="left:1835.0px;top:393.5px;width:181.0px;height:26.0px;background:#595959;border-radius:0 0 6px 6px;"></div>
<div class="t" style="top:397.0px;font-size:16.5px;color:#e6e6e6;left:1855.4px;">Z</div>
<div class="t" style="top:397.0px;font-size:16.5px;color:#e6e6e6;right:calc(100% - 1997.5px);">0°</div>
<div class="a" style="left:1834.0px;top:425.0px;width:241.0px;height:26.0px;background:#2c2c2c;border-radius:6px;box-shadow:0 0 0 1px #3a3a3a;"></div>
<div class="t" style="top:430.0px;font-size:16.5px;color:#e6e6e6;left:1845.0px;">XYZ Euler</div>
<div class="t" style="top:459.5px;font-size:16.5px;color:#e6e6e6;left:1839.0px;">Scale:</div>
<div class="a" style="left:1834.0px;top:483.0px;width:183.0px;height:82.0px;background:#2e2e2e;border-radius:7px;"></div>
<div class="a" style="left:1835.0px;top:484.0px;width:181.0px;height:26.0px;background:#595959;border-radius:6px 6px 0 0;"></div>
<div class="t" style="top:487.5px;font-size:16.5px;color:#e6e6e6;left:1855.4px;">X</div>
<div class="t" style="top:487.5px;font-size:16.5px;color:#e6e6e6;right:calc(100% - 1997.5px);">1.000</div>
<div class="a" style="left:1835.0px;top:511.0px;width:181.0px;height:26.0px;background:#595959;"></div>
<div class="t" style="top:514.5px;font-size:16.5px;color:#e6e6e6;left:1855.4px;">Y</div>
<div class="t" style="top:514.5px;font-size:16.5px;color:#e6e6e6;right:calc(100% - 1997.5px);">1.000</div>
<div class="a" style="left:1835.0px;top:538.0px;width:181.0px;height:26.0px;background:#595959;border-radius:0 0 6px 6px;"></div>
<div class="t" style="top:541.5px;font-size:16.5px;color:#e6e6e6;left:1855.4px;">Z</div>
<div class="t" style="top:541.5px;font-size:16.5px;color:#e6e6e6;right:calc(100% - 1997.5px);">1.000</div>
<div class="t" style="top:573.8px;font-size:16.5px;color:#e6e6e6;left:1839.0px;">Dimensions:</div>
<div class="a" style="left:1834.0px;top:597.5px;width:242.0px;height:82.0px;background:#2e2e2e;border-radius:7px;"></div>
<div class="a" style="left:1835.0px;top:598.5px;width:240.0px;height:26.0px;background:#595959;border-radius:6px 6px 0 0;"></div>
<div class="t" style="top:602.0px;font-size:16.5px;color:#e6e6e6;left:1855.4px;">X</div>
<div class="t" style="top:602.0px;font-size:16.5px;color:#e6e6e6;right:calc(100% - 2056.0px);">2 m</div>
<div class="a" style="left:1835.0px;top:625.5px;width:240.0px;height:26.0px;background:#595959;"></div>
<div class="t" style="top:629.0px;font-size:16.5px;color:#e6e6e6;left:1855.4px;">Y</div>
<div class="t" style="top:629.0px;font-size:16.5px;color:#e6e6e6;right:calc(100% - 2056.0px);">2 m</div>
<div class="a" style="left:1835.0px;top:652.5px;width:240.0px;height:26.0px;background:#595959;border-radius:0 0 6px 6px;"></div>
<div class="t" style="top:656.0px;font-size:16.5px;color:#e6e6e6;left:1855.4px;">Z</div>
<div class="t" style="top:656.0px;font-size:16.5px;color:#e6e6e6;right:calc(100% - 2056.0px);">0.08 m</div>
<div class="a" style="left:1822.0px;top:692.0px;width:264.0px;height:32.5px;background:#424242;"></div>
<div class="t" style="top:698.9px;font-size:18.5px;color:#ececec;left:1852.6px;">Properties</div>
<div class="a" style="left:1822.0px;top:725.5px;width:264.0px;height:32.5px;background:#424242;"></div>
<div class="t" style="top:732.1px;font-size:18.5px;color:#ececec;left:1852.6px;">Align Tools</div>
<div class="a" style="left:1822.0px;top:759.0px;width:264.0px;height:32.5px;background:#424242;"></div>
<div class="t" style="top:765.7px;font-size:18.5px;color:#ececec;left:1852.6px;">Edit Linked Library</div>
<div class="a" style="left:2086.0px;top:151.0px;width:27.0px;height:1201.0px;background:#242424;"></div>
<div class="a" style="left:2087.0px;top:160.0px;width:24.0px;height:53.0px;background:#474747;border-radius:0 6px 6px 0;"></div>
<div class="t" style="left:2099px;top:186.5px;font-size:16.5px;color:#e0e0e0;transform:translate(-50%,-50%) rotate(-90deg)">Item</div>
<div class="a" style="left:2087.0px;top:222.0px;width:24.0px;height:47.0px;background:#2c2c2c;border-radius:0 6px 6px 0;"></div>
<div class="t" style="left:2099px;top:245.5px;font-size:16.5px;color:#e0e0e0;transform:translate(-50%,-50%) rotate(-90deg)">Tool</div>
<div class="a" style="left:2087.0px;top:278.0px;width:24.0px;height:55.0px;background:#2c2c2c;border-radius:0 6px 6px 0;"></div>
<div class="t" style="left:2099px;top:305.5px;font-size:16.5px;color:#e0e0e0;transform:translate(-50%,-50%) rotate(-90deg)">View</div>
<div class="a" style="left:2087.0px;top:342.0px;width:24.0px;height:69.0px;background:#2c2c2c;border-radius:0 6px 6px 0;"></div>
<div class="t" style="left:2099px;top:376.5px;font-size:16.5px;color:#e0e0e0;transform:translate(-50%,-50%) rotate(-90deg)">Create</div>
<div class="a" style="left:2087.0px;top:420.0px;width:24.0px;height:98.0px;background:#2c2c2c;border-radius:0 6px 6px 0;"></div>
<div class="t" style="left:2099px;top:469.0px;font-size:16.5px;color:#e0e0e0;transform:translate(-50%,-50%) rotate(-90deg)">BlenderKit</div>
<div class="a" style="left:2087.0px;top:526.0px;width:24.0px;height:82.0px;background:#2c2c2c;border-radius:0 6px 6px 0;"></div>
<div class="t" style="left:2099px;top:567.0px;font-size:16.5px;color:#e0e0e0;transform:translate(-50%,-50%) rotate(-90deg)">Animate</div>
<div class="a" style="left:2087.0px;top:618.0px;width:24.0px;height:46.5px;background:#2c2c2c;border-radius:0 6px 6px 0;"></div>
<div class="t" style="left:2099px;top:641.2px;font-size:16.5px;color:#e0e0e0;transform:translate(-50%,-50%) rotate(-90deg)">Edit</div>
<div class="a" style="left:2087.0px;top:675.0px;width:24.0px;height:69.0px;background:#2c2c2c;border-radius:0 6px 6px 0;"></div>
<div class="t" style="left:2099px;top:709.5px;font-size:16.5px;color:#e0e0e0;transform:translate(-50%,-50%) rotate(-90deg)">MB-Lab</div>
<div class="a" style="left:2087.0px;top:758.0px;width:24.0px;height:97.0px;background:#2c2c2c;border-radius:0 6px 6px 0;"></div>
<div class="t" style="left:2099px;top:806.5px;font-size:16.5px;color:#e0e0e0;transform:translate(-50%,-50%) rotate(-90deg)">Real Snow</div>
<div class="a" style="left:2087.0px;top:866.0px;width:24.0px;height:58.5px;background:#2c2c2c;border-radius:0 6px 6px 0;"></div>
<div class="t" style="left:2099px;top:895.2px;font-size:16.5px;color:#e0e0e0;transform:translate(-50%,-50%) rotate(-90deg)">SSGI</div>
<div class="a" style="left:2087.0px;top:935.0px;width:24.0px;height:115.0px;background:#2c2c2c;border-radius:0 6px 6px 0;"></div>
<div class="t" style="left:2099px;top:992.5px;font-size:16.5px;color:#e0e0e0;transform:translate(-50%,-50%) rotate(-90deg)">DazToBlender</div>
<svg class="a" style="left:0;top:0;pointer-events:none" width="2560" height="1500"><polygon points="1833,162 1843,162 1838,171" fill="#a0a0a0"/><rect x="2058" y="164" width="2" height="2" fill="#1a1a1a"/><rect x="2058" y="168" width="2" height="2" fill="#1a1a1a"/><rect x="2062" y="164" width="2" height="2" fill="#1a1a1a"/><rect x="2062" y="168" width="2" height="2" fill="#1a1a1a"/><rect x="2066" y="164" width="2" height="2" fill="#1a1a1a"/><rect x="2066" y="168" width="2" height="2" fill="#1a1a1a"/><rect x="2070" y="164" width="2" height="2" fill="#1a1a1a"/><rect x="2070" y="168" width="2" height="2" fill="#1a1a1a"/><polyline points="2059.0,435.5 2064,440.5 2069.0,435.5" fill="none" stroke="#e6e6e6" stroke-width="1.8"/><path d="M2044,236 L2044,232 A5,5 0 0 1 2054,232" fill="none" stroke="#9a9a9a" stroke-width="1.6"/><rect x="2049" y="236" width="12" height="8.5" fill="none" stroke="#9a9a9a" stroke-width="1.6"/><rect x="2054" y="239" width="2" height="2" fill="#9a9a9a"/><path d="M2044,263 L2044,259 A5,5 0 0 1 2054,259" fill="none" stroke="#9a9a9a" stroke-width="1.6"/><rect x="2049" y="263" width="12" height="8.5" fill="none" stroke="#9a9a9a" stroke-width="1.6"/><rect x="2054" y="266" width="2" height="2" fill="#9a9a9a"/><path d="M2044,290 L2044,286 A5,5 0 0 1 2054,286" fill="none" stroke="#9a9a9a" stroke-width="1.6"/><rect x="2049" y="290" width="12" height="8.5" fill="none" stroke="#9a9a9a" stroke-width="1.6"/><rect x="2054" y="293" width="2" height="2" fill="#9a9a9a"/><path d="M2044,351 L2044,347 A5,5 0 0 1 2054,347" fill="none" stroke="#9a9a9a" stroke-width="1.6"/><rect x="2049" y="351" width="12" height="8.5" fill="none" stroke="#9a9a9a" stroke-width="1.6"/><rect x="2054" y="354" width="2" height="2" fill="#9a9a9a"/><path d="M2044,378 L2044,374 A5,5 0 0 1 2054,374" fill="none" stroke="#9a9a9a" stroke-width="1.6"/><rect x="2049" y="378" width="12" height="8.5" fill="none" stroke="#9a9a9a" stroke-width="1.6"/><rect x="2054" y="381" width="2" height="2" fill="#9a9a9a"/><path d="M2044,405 L2044,401 A5,5 0 0 1 2054,401" fill="none" stroke="#9a9a9a" stroke-width="1.6"/><rect x="2049" y="405" width="12" height="8.5" fill="none" stroke="#9a9a9a" stroke-width="1.6"/><rect x="2054" y="408" width="2" height="2" fill="#9a9a9a"/><path d="M2044,496 L2044,492 A5,5 0 0 1 2054,492" fill="none" stroke="#9a9a9a" stroke-width="1.6"/><rect x="2049" y="496" width="12" height="8.5" fill="none" stroke="#9a9a9a" stroke-width="1.6"/><rect x="2054" y="499" width="2" height="2" fill="#9a9a9a"/><path d="M2044,523 L2044,519 A5,5 0 0 1 2054,519" fill="none" stroke="#9a9a9a" stroke-width="1.6"/><rect x="2049" y="523" width="12" height="8.5" fill="none" stroke="#9a9a9a" stroke-width="1.6"/><rect x="2054" y="526" width="2" height="2" fill="#9a9a9a"/><path d="M2044,550 L2044,546 A5,5 0 0 1 2054,546" fill="none" stroke="#9a9a9a" stroke-width="1.6"/><rect x="2049" y="550" width="12" height="8.5" fill="none" stroke="#9a9a9a" stroke-width="1.6"/><rect x="2054" y="553" width="2" height="2" fill="#9a9a9a"/><polygon points="1834,703.0 1843,708.5 1834,714.0" fill="#a0a0a0"/><rect x="2058" y="705.5" width="2" height="2" fill="#1a1a1a"/><rect x="2058" y="709.5" width="2" height="2" fill="#1a1a1a"/><rect x="2062" y="705.5" width="2" height="2" fill="#1a1a1a"/><rect x="2062" y="709.5" width="2" height="2" fill="#1a1a1a"/><rect x="2066" y="705.5" width="2" height="2" fill="#1a1a1a"/><rect x="2066" y="709.5" width="2" height="2" fill="#1a1a1a"/><rect x="2070" y="705.5" width="2" height="2" fill="#1a1a1a"/><rect x="2070" y="709.5" width="2" height="2" fill="#1a1a1a"/><polygon points="1834,736.5 1843,742.0 1834,747.5" fill="#a0a0a0"/><rect x="2058" y="739.0" width="2" height="2" fill="#1a1a1a"/><rect x="2058" y="743.0" width="2" height="2" fill="#1a1a1a"/><rect x="2062" y="739.0" width="2" height="2" fill="#1a1a1a"/><rect x="2062" y="743.0" width="2" height="2" fill="#1a1a1a"/><rect x="2066" y="739.0" width="2" height="2" fill="#1a1a1a"/><rect x="2066" y="743.0" width="2" height="2" fill="#1a1a1a"/><rect x="2070" y="739.0" width="2" height="2" fill="#1a1a1a"/><rect x="2070" y="743.0" width="2" height="2" fill="#1a1a1a"/><polygon points="1834,770.0 1843,775.5 1834,781.0" fill="#a0a0a0"/><rect x="2058" y="772.5" width="2" height="2" fill="#1a1a1a"/><rect x="2058" y="776.5" width="2" height="2" fill="#1a1a1a"/><rect x="2062" y="772.5" width="2" height="2" fill="#1a1a1a"/><rect x="2062" y="776.5" width="2" height="2" fill="#1a1a1a"/><rect x="2066" y="772.5" width="2" height="2" fill="#1a1a1a"/><rect x="2066" y="776.5" width="2" height="2" fill="#1a1a1a"/><rect x="2070" y="772.5" width="2" height="2" fill="#1a1a1a"/><rect x="2070" y="776.5" width="2" height="2" fill="#1a1a1a"/></svg>
<svg class="a" style="left:0;top:0;pointer-events:none" width="2560" height="1500"><circle cx="1666.5" cy="246" r="12" fill="#6a8e2e"/><circle cx="1755.6" cy="242.4" r="12" fill="#9a3c4a"/><circle cx="1722" cy="314.7" r="12" fill="#2f5e9e"/><line x1="1722" y1="250.7" x2="1722" y2="186" stroke="#2e8ff0" stroke-width="3.2"/><line x1="1722" y1="250.7" x2="1688.6" y2="257.8" stroke="#ff3352" stroke-width="3.2"/><line x1="1722" y1="250.7" x2="1777.4" y2="254.7" stroke="#8bdc00" stroke-width="3.2"/><circle cx="1722" cy="186" r="14.7" fill="#2e8ff0"/><circle cx="1688.6" cy="257.8" r="14.7" fill="#ff3352"/><circle cx="1777.4" cy="254.7" r="14.7" fill="#8bdc00"/></svg>
<div class="t" style="top:177.4px;font-size:19px;color:#111;left:1722.0px;transform:translateX(-50%);">Z</div>
<div class="t" style="top:248.9px;font-size:19px;color:#111;left:1688.6px;transform:translateX(-50%);">X</div>
<div class="t" style="top:245.9px;font-size:19px;color:#111;left:1777.4px;transform:translateX(-50%);">Y</div>
<svg class="a" style="left:0;top:0;pointer-events:none" width="2560" height="1500"><circle cx="1776" cy="360.4" r="27.7" fill="#2f2f2f" fill-opacity="0.85"/><circle cx="1776" cy="421.8" r="27.7" fill="#2f2f2f" fill-opacity="0.85"/><circle cx="1776" cy="483.2" r="27.7" fill="#2f2f2f" fill-opacity="0.85"/><circle cx="1776" cy="542.8" r="27.7" fill="#2f2f2f" fill-opacity="0.85"/><circle cx="1780" cy="356" r="11" fill="#dcdcdc"/><line x1="1772" y1="364" x2="1762" y2="374" stroke="#dcdcdc" stroke-width="4" stroke-linecap="round"/><path d="M1780,350 L1780,362 M1774,356 L1786,356" stroke="#2f2f2f" stroke-width="2"/><path d="M1766,420 L1762,414 Q1760,410 1764,410 L1770,416 L1770,402 Q1771,399 1773,402 L1774,412 L1775,399 Q1777,396 1779,399 L1779,412 L1781,401 Q1783,398 1785,401 L1784,414 L1787,405 Q1789,403 1790,406 L1788,424 Q1786,436 1776,436 Q1769,436 1766,428 Z" fill="#dcdcdc"/><circle cx="1770" cy="475" r="5.5" fill="#dcdcdc"/><circle cx="1783" cy="475" r="5.5" fill="#dcdcdc"/><rect x="1765" y="481" width="20" height="12" fill="#dcdcdc"/><polygon points="1785,487 1792,482 1792,493" fill="#dcdcdc"/><rect x="1761" y="484" width="4" height="6" fill="#dcdcdc"/><path d="M1766,532 L1786,532 L1792,555 L1760,555 Z M1763,543 L1789,543 M1772,532 L1770,555 M1780,532 L1782,555" fill="none" stroke="#dcdcdc" stroke-width="2.4"/></svg>
<div class="area" style="left:2px;top:1359px;width:2111px;height:103px;background:#2a2a2a"></div>
<div class="a" style="left:2.0px;top:1359.0px;width:2111.0px;height:50.0px;background:#383838;border-radius:8px 8px 0 0;"></div>
<div class="a" style="left:17.0px;top:1364.5px;width:62.5px;height:38.5px;background:#2c2c2c;border-radius:6px;box-shadow:0 0 0 1.5px #353535;"></div>
<div class="a" style="left:91.0px;top:1364.5px;width:264.0px;height:38.5px;background:#2c2c2c;border-radius:6px;box-shadow:0 0 0 1.5px #353535;"></div>
<div class="a" style="left:233.5px;top:1364.5px;width:1.5px;height:38.5px;background:#3a3a3a;"></div>
<div class="t" style="top:1373.5px;font-size:23px;color:#e6e6e6;left:107.0px;">Playback</div>
<div class="t" style="top:1373.5px;font-size:23px;color:#e6e6e6;left:249.4px;">Keying</div>
<div class="t" style="top:1373.5px;font-size:23px;color:#e6e6e6;left:371.7px;">View</div>
<div class="t" style="top:1373.5px;font-size:23px;color:#e6e6e6;left:452.8px;">Marker</div>
<div class="a" style="left:892.0px;top:1366.0px;width:36.0px;height:36.0px;background:#555555;border-radius:6px;"></div>
<div class="a" style="left:942.0px;top:1366.0px;width:236.0px;height:36.0px;background:#555555;border-radius:6px;"></div>
<div class="a" style="left:980.3px;top:1366.0px;width:2.0px;height:36.0px;background:#3f3f3f;"></div>
<div class="a" style="left:1019.6px;top:1366.0px;width:2.0px;height:36.0px;background:#3f3f3f;"></div>
<div class="a" style="left:1058.9px;top:1366.0px;width:2.0px;height:36.0px;background:#3f3f3f;"></div>
<div class="a" style="left:1098.2px;top:1366.0px;width:2.0px;height:36.0px;background:#3f3f3f;"></div>
<div class="a" style="left:1137.5px;top:1366.0px;width:2.0px;height:36.0px;background:#3f3f3f;"></div>
<div class="a" style="left:1526.0px;top:1365.5px;width:149.0px;height:37.5px;background:#555555;border-radius:7px;box-shadow:0 0 0 1.5px #333;"></div>
<div class="t" style="top:1373.5px;font-size:23px;color:#e6e6e6;left:1600.0px;transform:translateX(-50%);">1</div>
<div class="a" style="left:1687.0px;top:1365.5px;width:388.0px;height:37.5px;background:#555555;border-radius:7px;box-shadow:0 0 0 1.5px #333;"></div>
<div class="a" style="left:1723.0px;top:1365.5px;width:1.5px;height:37.5px;background:#3a3a3a;"></div>
<div class="a" style="left:1903.0px;top:1365.5px;width:1.5px;height:37.5px;background:#3a3a3a;"></div>
<div class="t" style="top:1373.5px;font-size:23px;color:#e6e6e6;left:1757.0px;">Start</div>
<div class="t" style="top:1373.5px;font-size:23px;color:#e6e6e6;right:calc(100% - 1875.0px);">1</div>
<div class="t" style="top:1373.5px;font-size:23px;color:#e6e6e6;left:1937.0px;">End</div>
<div class="t" style="top:1373.5px;font-size:23px;color:#e6e6e6;right:calc(100% - 2048.0px);">250</div>
<div class="a" style="left:70.6px;top:1409.0px;width:1.0px;height:53.0px;background:#262626;"></div>
<div class="a" style="left:149.3px;top:1409.0px;width:1.0px;height:53.0px;background:#262626;"></div>
<div class="a" style="left:227.9px;top:1409.0px;width:1.0px;height:53.0px;background:#262626;"></div>
<div class="a" style="left:306.6px;top:1409.0px;width:1.0px;height:53.0px;background:#262626;"></div>
<div class="a" style="left:385.2px;top:1409.0px;width:1.0px;height:53.0px;background:#262626;"></div>
<div class="a" style="left:463.9px;top:1409.0px;width:1.0px;height:53.0px;background:#262626;"></div>
<div class="a" style="left:542.5px;top:1409.0px;width:1.0px;height:53.0px;background:#262626;"></div>
<div class="a" style="left:621.2px;top:1409.0px;width:1.0px;height:53.0px;background:#262626;"></div>
<div class="a" style="left:699.8px;top:1409.0px;width:1.0px;height:53.0px;background:#262626;"></div>
<div class="a" style="left:778.5px;top:1409.0px;width:1.0px;height:53.0px;background:#262626;"></div>
<div class="a" style="left:857.1px;top:1409.0px;width:1.0px;height:53.0px;background:#262626;"></div>
<div class="a" style="left:935.8px;top:1409.0px;width:1.0px;height:53.0px;background:#262626;"></div>
<div class="a" style="left:1014.4px;top:1409.0px;width:1.0px;height:53.0px;background:#262626;"></div>
<div class="a" style="left:1093.1px;top:1409.0px;width:1.0px;height:53.0px;background:#262626;"></div>
<div class="a" style="left:1171.7px;top:1409.0px;width:1.0px;height:53.0px;background:#262626;"></div>
<div class="a" style="left:1250.4px;top:1409.0px;width:1.0px;height:53.0px;background:#262626;"></div>
<div class="a" style="left:1329.0px;top:1409.0px;width:1.0px;height:53.0px;background:#262626;"></div>
<div class="a" style="left:1407.7px;top:1409.0px;width:1.0px;height:53.0px;background:#262626;"></div>
<div class="a" style="left:1486.3px;top:1409.0px;width:1.0px;height:53.0px;background:#262626;"></div>
<div class="a" style="left:1565.0px;top:1409.0px;width:1.0px;height:53.0px;background:#262626;"></div>
<div class="a" style="left:1643.6px;top:1409.0px;width:1.0px;height:53.0px;background:#262626;"></div>
<div class="a" style="left:1722.3px;top:1409.0px;width:1.0px;height:53.0px;background:#262626;"></div>
<div class="a" style="left:1800.9px;top:1409.0px;width:1.0px;height:53.0px;background:#262626;"></div>
<div class="a" style="left:1879.6px;top:1409.0px;width:1.0px;height:53.0px;background:#262626;"></div>
<div class="a" style="left:1958.2px;top:1409.0px;width:1.0px;height:53.0px;background:#262626;"></div>
<div class="a" style="left:2036.9px;top:1409.0px;width:1.0px;height:53.0px;background:#262626;"></div>
<div class="t" style="top:1420.7px;font-size:21px;color:#b8b8b8;left:228.4px;transform:translateX(-50%);letter-spacing:1px;">20</div>
<div class="t" style="top:1420.7px;font-size:21px;color:#b8b8b8;left:385.7px;transform:translateX(-50%);letter-spacing:1px;">40</div>
<div class="t" style="top:1420.7px;font-size:21px;color:#b8b8b8;left:543.0px;transform:translateX(-50%);letter-spacing:1px;">60</div>
<div class="t" style="top:1420.7px;font-size:21px;color:#b8b8b8;left:700.3px;transform:translateX(-50%);letter-spacing:1px;">80</div>
<div class="t" style="top:1420.7px;font-size:21px;color:#b8b8b8;left:857.6px;transform:translateX(-50%);letter-spacing:1px;">100</div>
<div class="t" style="top:1420.7px;font-size:21px;color:#b8b8b8;left:1014.9px;transform:translateX(-50%);letter-spacing:1px;">120</div>
<div class="t" style="top:1420.7px;font-size:21px;color:#b8b8b8;left:1172.2px;transform:translateX(-50%);letter-spacing:1px;">140</div>
<div class="t" style="top:1420.7px;font-size:21px;color:#b8b8b8;left:1329.5px;transform:translateX(-50%);letter-spacing:1px;">160</div>
<div class="t" style="top:1420.7px;font-size:21px;color:#b8b8b8;left:1486.8px;transform:translateX(-50%);letter-spacing:1px;">180</div>
<div class="t" style="top:1420.7px;font-size:21px;color:#b8b8b8;left:1644.1px;transform:translateX(-50%);letter-spacing:1px;">200</div>
<div class="t" style="top:1420.7px;font-size:21px;color:#b8b8b8;left:1801.4px;transform:translateX(-50%);letter-spacing:1px;">220</div>
<div class="t" style="top:1420.7px;font-size:21px;color:#b8b8b8;left:1958.7px;transform:translateX(-50%);letter-spacing:1px;">240</div>
<div class="a" style="left:2.0px;top:1438.0px;width:14.0px;height:24.0px;background:#262626;border-radius:0 0 0 8px;"></div>
<div class="a" style="left:2098.0px;top:1438.0px;width:15.0px;height:24.0px;background:#262626;border-radius:0 0 8px 0;"></div>
<div class="a" style="left:16.0px;top:1439.3px;width:2083.0px;height:20.2px;background:#434343;border-radius:4px;"></div>
<div class="a" style="left:16.0px;top:1439.3px;width:2083.0px;height:1.3px;background:#4b4b4b;"></div>
<div class="a" style="left:18.0px;top:1441.0px;width:2079.0px;height:16.0px;background:#676767;border-radius:8px;"></div>
<div class="a" style="left:55.0px;top:1415.0px;width:48.0px;height:25.0px;background:#5680c2;border-radius:7px 7px 0 0;"></div>
<div class="t" style="top:1419.7px;font-size:21px;color:#ffffff;left:79.0px;transform:translateX(-50%);">1</div>
<div class="a" style="left:77.5px;top:1458.0px;width:3.0px;height:4.0px;background:#5680c2;"></div>
<svg class="a" style="left:0;top:0;pointer-events:none" width="2560" height="1500"><circle cx="40" cy="1383.5" r="14" fill="#dcdcdc"/><path d="M44,1375 L37,1384 L42,1392" stroke="#2c2c2c" stroke-width="2.6" fill="none" stroke-linecap="round"/><polyline points="60.5,1381.25 66,1386.75 71.5,1381.25" fill="none" stroke="#e6e6e6" stroke-width="2.2"/><polyline points="215.0,1382.0 221,1388.0 227.0,1382.0" fill="none" stroke="#e6e6e6" stroke-width="2.2"/><polyline points="336.0,1382.0 342,1388.0 348.0,1382.0" fill="none" stroke="#e6e6e6" stroke-width="2.2"/><circle cx="910" cy="1384" r="8.5" fill="#dcdcdc"/><rect x="950" y="1374" width="4" height="20" fill="#dcdcdc"/><polygon points="957,1384 968,1375 968,1393" fill="#dcdcdc"/><polygon points="983,1384 991,1375 999,1384 991,1393" fill="#dcdcdc"/><polygon points="1001,1384 1012,1376 1012,1392" fill="#dcdcdc"/><polygon points="1028,1384 1042,1373 1042,1395" fill="#dcdcdc"/><polygon points="1083,1384 1069,1373 1069,1395" fill="#dcdcdc"/><polygon points="1104,1376 1115,1384 1104,1392" fill="#dcdcdc"/><polygon points="1117,1384 1125,1375 1133,1384 1125,1393" fill="#dcdcdc"/><polygon points="1151,1375 1162,1384 1151,1393" fill="#dcdcdc"/><rect x="1164" y="1374" width="4" height="20" fill="#dcdcdc"/><circle cx="1705" cy="1387" r="10.5" fill="none" stroke="#dcdcdc" stroke-width="2"/><path d="M1705,1380 L1705,1387 L1711,1387 M1700,1372 L1710,1372 M1705,1372 L1705,1376 M1713,1377 L1717,1373" stroke="#dcdcdc" stroke-width="2" fill="none"/><circle cx="26.5" cy="1449" r="6" fill="#3a3a3a"/><circle cx="2088" cy="1449" r="6" fill="#3a3a3a"/><path d="M5,1444 L10,1449 L5,1454" stroke="#6a6a6a" stroke-width="2.2" fill="none"/><path d="M2109,1444 L2104,1449 L2109,1454" stroke="#6a6a6a" stroke-width="2.2" fill="none"/></svg>
<div class="a" style="left:2.0px;top:1468.0px;width:2556.0px;height:32.0px;background:#303030;"></div>
<div class="t" style="top:1471.5px;font-size:23px;color:#c4c4c4;left:68.0px;">Select</div>
<div class="t" style="top:1471.5px;font-size:23px;color:#c4c4c4;left:204.0px;">Box Select</div>
<div class="t" style="top:1471.5px;font-size:23px;color:#c4c4c4;left:607.0px;">Rotate View</div>
<div class="t" style="top:1471.5px;font-size:23px;color:#c4c4c4;left:1145.8px;">Object Context Menu</div>
<div class="t" style="top:1471.5px;font-size:23px;color:#c4c4c4;left:1810.6px;letter-spacing:0.8px;">2.90.0</div>
<div class="t" style="top:1471.5px;font-size:23px;color:#c4c4c4;left:1914.5px;letter-spacing:0.95px;">00:00:00:00 / 00:00:10:09</div>
<div class="t" style="top:1471.5px;font-size:23px;color:#c4c4c4;left:2261.0px;">Start Frame (249 left)</div>
<svg class="a" style="left:0;top:0;pointer-events:none" width="2560" height="1500"><rect x="24" y="1471" width="20" height="27" rx="8" fill="none" stroke="#b0b0b0" stroke-width="2"/><path d="M24,1483 L24,1478 Q24,1471 32,1471 L33,1471 L33,1483 Z" fill="#b0b0b0"/><rect x="156" y="1471" width="20" height="27" rx="8" fill="none" stroke="#b0b0b0" stroke-width="2"/><path d="M156,1483 L156,1478 Q156,1471 164,1471 L165,1471 L165,1483 Z" fill="#b0b0b0"/><path d="M181,1469 L181,1483 M186,1470 L186,1480" stroke="#b0b0b0" stroke-width="1.8"/><rect x="563.5" y="1471" width="20" height="27" rx="8" fill="none" stroke="#b0b0b0" stroke-width="2"/><rect x="571.5" y="1475" width="4" height="8" rx="1.5" fill="#b0b0b0"/><rect x="1103" y="1471" width="20" height="27" rx="8" fill="none" stroke="#b0b0b0" stroke-width="2"/><path d="M1123,1483 L1123,1478 Q1123,1471 1115,1471 L1114,1471 L1114,1483 Z" fill="#b0b0b0"/></svg>
<div class="area" style="left:2120px;top:49px;width:437px;height:450px;background:#282828"></div>
<div class="a" style="left:2120.0px;top:49.0px;width:437.0px;height:49.0px;background:#3b3b3b;border-radius:8px 8px 0 0;"></div>
<div class="a" style="left:2137.0px;top:54.0px;width:61.0px;height:38.0px;background:#2c2c2c;border-radius:6px;box-shadow:0 0 0 1.5px #353535;"></div>
<div class="a" style="left:2210.0px;top:54.0px;width:62.0px;height:38.0px;background:#2c2c2c;border-radius:6px;box-shadow:0 0 0 1.5px #353535;"></div>
<div class="a" style="left:2307.0px;top:54.0px;width:230.0px;height:38.0px;background:#1d1d1d;border-radius:7px;box-shadow:0 0 0 1.5px #353535;"></div>
<div class="a" style="left:2120.0px;top:98.0px;width:437.0px;height:42.0px;background:#282828;"></div>
<div class="a" style="left:2120.0px;top:140.0px;width:437.0px;height:40.0px;background:#2b2b2b;"></div>
<div class="a" style="left:2120.0px;top:180.0px;width:437.0px;height:40.0px;background:#282828;"></div>
<div class="a" style="left:2120.0px;top:220.0px;width:437.0px;height:40.0px;background:#2b2b2b;"></div>
<div class="a" style="left:2120.0px;top:260.0px;width:437.0px;height:40.0px;background:#282828;"></div>
<div class="a" style="left:2120.0px;top:300.0px;width:437.0px;height:40.0px;background:#2b2b2b;"></div>
<div class="a" style="left:2120.0px;top:340.0px;width:437.0px;height:40.0px;background:#282828;"></div>
<div class="a" style="left:2120.0px;top:380.0px;width:437.0px;height:40.0px;background:#2b2b2b;"></div>
<div class="a" style="left:2120.0px;top:420.0px;width:437.0px;height:40.0px;background:#282828;"></div>
<div class="a" style="left:2120.0px;top:460.0px;width:437.0px;height:39.0px;background:#2b2b2b;border-radius:0 0 8px 8px;"></div>
<div class="t" style="top:111.2px;font-size:23px;color:#e0e0e0;left:2207.6px;">Scene Collection</div>
<div class="t" style="top:151.0px;font-size:23px;color:#e0e0e0;left:2288.0px;">Collection 2</div>
<div class="t" style="top:190.8px;font-size:23px;color:#e0e0e0;left:2288.0px;">ground</div>
<div class="t" style="top:230.6px;font-size:23px;color:#e0e0e0;left:2288.0px;">IrradianceVolume</div>
<div class="t" style="top:270.4px;font-size:23px;color:#e0e0e0;left:2288.0px;">Light</div>
<div class="t" style="top:310.2px;font-size:23px;color:#e0e0e0;left:2288.0px;">MCH_Rotation_targe</div>
<div class="t" style="top:350.0px;font-size:23px;color:#e0e0e0;left:2288.0px;">ReflectionCubemap</div>
<div class="t" style="top:389.8px;font-size:23px;color:#e0e0e0;left:2288.0px;">Sun</div>
<div class="t" style="top:429.6px;font-size:23px;color:#e0e0e0;left:2288.0px;">Collection</div>
<div class="t" style="top:469.4px;font-size:23px;color:#e0e0e0;left:2328.0px;">bake mask</div>
<svg class="a" style="left:0;top:0;pointer-events:none" width="2560" height="1500"><rect x="2145" y="59" width="11" height="6" rx="1" fill="#dcdcdc"/><path d="M2149,65 L2149,86 L2156,86 M2149,76 L2156,76" stroke="#aaaaaa" stroke-width="1.8" fill="none"/><rect x="2159" y="72" width="14" height="6" rx="1" fill="#dcdcdc"/><rect x="2159" y="82" width="14" height="6" rx="1" fill="#dcdcdc"/><polyline points="2179.5,72.25 2185,77.75 2190.5,72.25" fill="none" stroke="#e6e6e6" stroke-width="2.2"/><path d="M2220,70 L2220,87 L2236,87" fill="none" stroke="#d0d0d0" stroke-width="1.8"/><path d="M2224,66 L2224,83 L2240,83" fill="none" stroke="#d0d0d0" stroke-width="1.8"/><rect x="2228" y="59" width="16" height="19" fill="none" stroke="#d0d0d0" stroke-width="1.8"/><path d="M2229,77 L2235,66 L2239,72 L2243,77 Z" fill="#d0d0d0"/><circle cx="2240" cy="63" r="1.6" fill="#d0d0d0"/><polyline points="2253.5,72.25 2259,77.75 2264.5,72.25" fill="none" stroke="#e6e6e6" stroke-width="2.2"/><circle cx="2332" cy="70" r="9" fill="none" stroke="#e0e0e0" stroke-width="2"/><line x1="2326" y1="77" x2="2315" y2="88" stroke="#e0e0e0" stroke-width="2"/><rect x="2168" y="110.2" width="22" height="6" fill="none" stroke="#dcdcdc" stroke-width="2.2"/><rect x="2170" y="118.2" width="18" height="15" fill="none" stroke="#dcdcdc" stroke-width="2.2"/><rect x="2176" y="121.7" width="6" height="3" rx="1.5" fill="#dcdcdc"/><polygon points="2172,157.0 2184,157.0 2178,168.0" fill="#b4b4b4"/><rect x="2209.0" y="152.0" width="20" height="20" rx="3" fill="#e0e0e0"/><path d="M2213,162.5 L2217.5,167.0 L2225.5,157.0" stroke="#2a2a2a" stroke-width="3" fill="none"/><rect x="2248" y="150.0" width="22" height="6" fill="none" stroke="#dcdcdc" stroke-width="2.2"/><rect x="2250" y="158.0" width="18" height="15" fill="none" stroke="#dcdcdc" stroke-width="2.2"/><rect x="2256" y="161.5" width="6" height="3" rx="1.5" fill="#dcdcdc"/><path d="M2511,162.0 Q2524,147.0 2537,162.0 Q2524,177.0 2511,162.0 Z" fill="#e0e0e0"/><circle cx="2524" cy="162.0" r="6.5" fill="#282828"/><circle cx="2524" cy="162.0" r="3.6" fill="#e0e0e0"/><line x1="2218" y1="172.0" x2="2218" y2="400.79999999999995" stroke="#7a7a7a" stroke-width="1.8"/><line x1="2218" y1="201.8" x2="2250" y2="201.8" stroke="#7a7a7a" stroke-width="1.8"/><polygon points="2213,195.8 2224,201.8 2213,207.8" fill="#b4b4b4"/><path d="M2249,189.8 L2269,189.8 L2259,213.8 Z" fill="none" stroke="#d08a4c" stroke-width="5" stroke-linejoin="round"/><path d="M2511,201.8 Q2524,186.8 2537,201.8 Q2524,216.8 2511,201.8 Z" fill="#e0e0e0"/><circle cx="2524" cy="201.8" r="6.5" fill="#282828"/><circle cx="2524" cy="201.8" r="3.6" fill="#e0e0e0"/><line x1="2218" y1="241.6" x2="2250" y2="241.6" stroke="#7a7a7a" stroke-width="1.8"/><polygon points="2213,235.6 2224,241.6 2213,247.6" fill="#b4b4b4"/><g stroke="#d08a4c" stroke-width="4" stroke-linecap="round"><path d="M2248,235.6 L2253,229.6 M2248,246.6 L2262,229.6 M2254,253.6 L2268,236.6 M2262,253.6 L2268,246.6"/></g><circle cx="2259" cy="241.6" r="2" fill="#d08a4c"/><path d="M2511,241.6 Q2524,226.6 2537,241.6 Q2524,256.6 2511,241.6 Z" fill="#e0e0e0"/><circle cx="2524" cy="241.6" r="6.5" fill="#282828"/><circle cx="2524" cy="241.6" r="3.6" fill="#e0e0e0"/><line x1="2218" y1="281.4" x2="2250" y2="281.4" stroke="#7a7a7a" stroke-width="1.8"/><polygon points="2213,275.4 2224,281.4 2213,287.4" fill="#b4b4b4"/><circle cx="2259" cy="278.4" r="12" fill="#d08a4c"/><rect x="2254" y="291.4" width="10" height="2.5" fill="#d08a4c"/><rect x="2256" y="295.4" width="6" height="2" fill="#d08a4c"/><path d="M2254,277.4 L2264,277.4 M2256,277.4 L2256,284.4 M2262,277.4 L2262,284.4" stroke="#282828" stroke-width="2"/><path d="M2511,281.4 Q2524,266.4 2537,281.4 Q2524,296.4 2511,281.4 Z" fill="#e0e0e0"/><circle cx="2524" cy="281.4" r="6.5" fill="#282828"/><circle cx="2524" cy="281.4" r="3.6" fill="#e0e0e0"/><line x1="2218" y1="321.2" x2="2250" y2="321.2" stroke="#7a7a7a" stroke-width="1.8"/><polygon points="2213,315.2 2224,321.2 2213,327.2" fill="#b4b4b4"/><path d="M2257,305.2 L2257,321.2 L2272,321.2 M2257,321.2 L2248,332.2" stroke="#d08a4c" stroke-width="4.5" stroke-linecap="round" fill="none"/><path d="M2511,321.2 Q2524,306.2 2537,321.2 Q2524,336.2 2511,321.2 Z" fill="#e0e0e0"/><circle cx="2524" cy="321.2" r="6.5" fill="#282828"/><circle cx="2524" cy="321.2" r="3.6" fill="#e0e0e0"/><line x1="2218" y1="361.0" x2="2250" y2="361.0" stroke="#7a7a7a" stroke-width="1.8"/><polygon points="2213,355.0 2224,361.0 2213,367.0" fill="#b4b4b4"/><g stroke="#d08a4c" stroke-width="4" stroke-linecap="round"><path d="M2248,355.0 L2253,349.0 M2248,366.0 L2262,349.0 M2254,373.0 L2268,356.0 M2262,373.0 L2268,366.0"/></g><circle cx="2259" cy="361.0" r="2" fill="#d08a4c"/><path d="M2511,361.0 Q2524,346.0 2537,361.0 Q2524,376.0 2511,361.0 Z" fill="#e0e0e0"/><circle cx="2524" cy="361.0" r="6.5" fill="#282828"/><circle cx="2524" cy="361.0" r="3.6" fill="#e0e0e0"/><line x1="2218" y1="400.79999999999995" x2="2250" y2="400.79999999999995" stroke="#7a7a7a" stroke-width="1.8"/><polygon points="2213,394.79999999999995 2224,400.79999999999995 2213,406.79999999999995" fill="#b4b4b4"/><circle cx="2259" cy="397.79999999999995" r="12" fill="#d08a4c"/><rect x="2254" y="410.79999999999995" width="10" height="2.5" fill="#d08a4c"/><rect x="2256" y="414.79999999999995" width="6" height="2" fill="#d08a4c"/><path d="M2254,396.79999999999995 L2264,396.79999999999995 M2256,396.79999999999995 L2256,403.79999999999995 M2262,396.79999999999995 L2262,403.79999999999995" stroke="#282828" stroke-width="2"/><path d="M2511,400.79999999999995 Q2524,385.79999999999995 2537,400.79999999999995 Q2524,415.79999999999995 2511,400.79999999999995 Z" fill="#e0e0e0"/><circle cx="2524" cy="400.79999999999995" r="6.5" fill="#282828"/><circle cx="2524" cy="400.79999999999995" r="3.6" fill="#e0e0e0"/><path d="M2412,190.8 L2430,190.8 L2421,212.8 Z" fill="none" stroke="#23b89a" stroke-width="1.8"/><rect x="2408" y="186.8" width="6" height="6" fill="#2b2b2b" stroke="#23b89a" stroke-width="1.6"/><rect x="2428" y="186.8" width="6" height="6" fill="#2b2b2b" stroke="#23b89a" stroke-width="1.6"/><rect x="2418" y="210.8" width="6" height="6" fill="#2b2b2b" stroke="#23b89a" stroke-width="1.6"/><circle cx="2398" cy="279.4" r="12" fill="none" stroke="#23b89a" stroke-width="2"/><circle cx="2398" cy="279.4" r="2.5" fill="#23b89a"/><path d="M2398,281.4 L2398,297.4" stroke="#23b89a" stroke-width="2" stroke-dasharray="3,2"/><circle cx="2386" cy="400.79999999999995" r="7" fill="none" stroke="#23b89a" stroke-width="2"/><g stroke="#23b89a" stroke-width="2"><path d="M2386,386.79999999999995 L2386,391.79999999999995 M2386,409.79999999999995 L2386,414.79999999999995 M2372,400.79999999999995 L2377,400.79999999999995 M2395,400.79999999999995 L2400,400.79999999999995 M2376,390.79999999999995 L2380,394.79999999999995 M2392,406.79999999999995 L2396,410.79999999999995 M2376,410.79999999999995 L2380,406.79999999999995 M2392,394.79999999999995 L2396,390.79999999999995"/></g><polygon points="2172,435.59999999999997 2184,435.59999999999997 2178,446.59999999999997" fill="#b4b4b4"/><rect x="2209.0" y="430.59999999999997" width="20" height="20" rx="3" fill="#e0e0e0"/><path d="M2213,441.09999999999997 L2217.5,445.59999999999997 L2225.5,435.59999999999997" stroke="#2a2a2a" stroke-width="3" fill="none"/><rect x="2240" y="423.59999999999997" width="38" height="36" rx="7" fill="#333333" stroke="#5a5a5a" stroke-width="1.5"/><rect x="2248" y="428.59999999999997" width="22" height="6" fill="none" stroke="#dcdcdc" stroke-width="2.2"/><rect x="2250" y="436.59999999999997" width="18" height="15" fill="none" stroke="#dcdcdc" stroke-width="2.2"/><rect x="2256" y="440.09999999999997" width="6" height="3" rx="1.5" fill="#dcdcdc"/><path d="M2511,440.59999999999997 Q2524,425.59999999999997 2537,440.59999999999997 Q2524,455.59999999999997 2511,440.59999999999997 Z" fill="#e0e0e0"/><circle cx="2524" cy="440.59999999999997" r="6.5" fill="#282828"/><circle cx="2524" cy="440.59999999999997" r="3.6" fill="#e0e0e0"/><polygon points="2213,474.4 2224,480.4 2213,486.4" fill="#b4b4b4"/><rect x="2249.0" y="470.4" width="20" height="20" rx="3" fill="#e0e0e0"/><path d="M2253,480.9 L2257.5,485.4 L2265.5,475.4" stroke="#2a2a2a" stroke-width="3" fill="none"/><rect x="2288" y="468.4" width="22" height="6" fill="none" stroke="#dcdcdc" stroke-width="2.2"/><rect x="2290" y="476.4" width="18" height="15" fill="none" stroke="#dcdcdc" stroke-width="2.2"/><rect x="2296" y="479.9" width="6" height="3" rx="1.5" fill="#dcdcdc"/><path d="M2488,466.4 L2502,466.4 L2502,474.4 L2494,474.4 L2502,488.4 L2502,494.4 Z" fill="#d08a4c"/><path d="M2511,480.4 Q2524,465.4 2537,480.4 Q2524,495.4 2511,480.4 Z" fill="#e0e0e0"/><circle cx="2524" cy="480.4" r="6.5" fill="#282828"/><circle cx="2524" cy="480.4" r="3.6" fill="#e0e0e0"/></svg>
<div class="area" style="left:2120px;top:506px;width:437px;height:955px;background:#232323"></div>
<div class="a" style="left:2120.0px;top:506.0px;width:437.0px;height:50.0px;background:#3b3b3b;border-radius:8px 8px 0 0;"></div>
<div class="a" style="left:2176.0px;top:556.0px;width:381.0px;height:905.0px;background:#373737;border-radius:0 0 8px 0;"></div>
<div class="a" style="left:2136.0px;top:511.0px;width:62.0px;height:37.0px;background:#2c2c2c;border-radius:6px;box-shadow:0 0 0 1.5px #353535;"></div>
<svg class="a" style="left:0;top:0;pointer-events:none" width="2560" height="1500"><rect x="2145" y="516" width="28" height="12" rx="6" fill="#dcdcdc"/><rect x="2159" y="518.5" width="11.5" height="7" rx="3.5" fill="#2c2c2c"/><rect x="2145" y="531" width="28" height="12" rx="6" fill="#dcdcdc"/><rect x="2159" y="533.5" width="11.5" height="7" rx="3.5" fill="#2c2c2c"/><polyline points="2179.5,527.25 2185,532.75 2190.5,527.25" fill="none" stroke="#e6e6e6" stroke-width="2.2"/></svg>
<svg class="a" style="left:2227.0px;top:516.0px;" width="28" height="28" viewBox="0 0 28 28"><path d="M9,0 L15.2,11 Q10.2,16 9.6,23.8 Q3.5,23.6 0.8,20.5 Q-0.6,18.5 0.4,16 Z" fill="#d9d9d9"/><circle cx="24" cy="4" r="4" fill="#d9d9d9"/><circle cx="19.9" cy="20" r="6.9" fill="none" stroke="#d9d9d9" stroke-width="2.3"/><path d="M16,19 Q16.5,16.5 18.5,16" stroke="#d9d9d9" stroke-width="1.6" fill="none"/></svg>
<div class="t" style="top:517.9px;font-size:23px;color:#e6e6e6;left:2273.0px;">Scene</div>
<div class="a" style="left:2124.0px;top:574.0px;width:52.0px;height:52.0px;background:#2c2c2c;border-radius:8px 0 0 8px;"></div>
<div class="a" style="left:2124.0px;top:646.0px;width:52.0px;height:52.0px;background:#3d3d3d;border-radius:8px 0 0 8px;"></div>
<div class="a" style="left:2124.0px;top:702.0px;width:52.0px;height:52.0px;background:#2c2c2c;border-radius:8px 0 0 8px;"></div>
<div class="a" style="left:2124.0px;top:759.0px;width:52.0px;height:51.0px;background:#2c2c2c;border-radius:8px 0 0 8px;"></div>
<div class="a" style="left:2124.0px;top:815.0px;width:52.0px;height:51.0px;background:#2c2c2c;border-radius:8px 0 0 8px;"></div>
<div class="a" style="left:2124.0px;top:871.0px;width:52.0px;height:51.0px;background:#2c2c2c;border-radius:8px 0 0 8px;"></div>
<div class="a" style="left:2124.0px;top:944.0px;width:52.0px;height:49.0px;background:#2c2c2c;border-radius:8px 0 0 8px;"></div>
<div class="a" style="left:2124.0px;top:999.0px;width:52.0px;height:51.0px;background:#2c2c2c;border-radius:8px 0 0 8px;"></div>
<div class="a" style="left:2124.0px;top:1054.0px;width:52.0px;height:51.0px;background:#2c2c2c;border-radius:8px 0 0 8px;"></div>
<div class="a" style="left:2124.0px;top:1111.0px;width:52.0px;height:51.0px;background:#2c2c2c;border-radius:8px 0 0 8px;"></div>
<div class="a" style="left:2124.0px;top:1167.0px;width:52.0px;height:51.0px;background:#2c2c2c;border-radius:8px 0 0 8px;"></div>
<div class="a" style="left:2124.0px;top:1223.0px;width:52.0px;height:51.0px;background:#2c2c2c;border-radius:8px 0 0 8px;"></div>
<div class="a" style="left:2124.0px;top:1279.0px;width:52.0px;height:51.0px;background:#2c2c2c;border-radius:8px 0 0 8px;"></div>
<div class="a" style="left:2124.0px;top:1350.0px;width:52.0px;height:52.0px;background:#2c2c2c;border-radius:8px 0 0 8px;"></div>
<svg class="a" style="left:0;top:0;pointer-events:none" width="2560" height="1500"><path d="M2531,518 L2541,528 L2536,531 L2528,539 L2529,544 L2513,528 L2518,529 L2526,521 Z" fill="none" stroke="#9a9a9a" stroke-width="2" stroke-linejoin="round"/><line x1="2519" y1="538" x2="2510" y2="547" stroke="#9a9a9a" stroke-width="2"/><rect x="2139" y="588" width="2.5" height="12" fill="#dcdcdc"/><rect x="2136" y="600" width="8" height="11" rx="4" fill="#dcdcdc"/><path d="M2156,586 L2156,594 Q2160,597 2164,594 L2164,586" stroke="#dcdcdc" stroke-width="3" fill="none"/><rect x="2158.5" y="595" width="3" height="16" rx="1.5" fill="#dcdcdc"/><rect x="2137" y="662" width="30" height="22" rx="2" fill="#dcdcdc"/><rect x="2141" y="658" width="12" height="5" fill="#dcdcdc"/><path d="M2141,668 L2157,668 M2141,673 L2157,673 M2141,678 L2157,678" stroke="#3d3d3d" stroke-width="2"/><circle cx="2162" cy="668" r="2" fill="#3d3d3d"/><circle cx="2162" cy="677" r="2" fill="#3d3d3d"/><rect x="2136" y="715" width="30" height="12" rx="2" fill="#dcdcdc"/><rect x="2141" y="725" width="20" height="17" fill="#dcdcdc"/><path d="M2145,740 L2151,731 L2157,740 Z" fill="#2c2c2c"/><rect x="2144" y="724" width="14" height="2" fill="#2c2c2c"/><path d="M2136,778 L2136,797 L2155,797" fill="none" stroke="#dcdcdc" stroke-width="1.8"/><path d="M2140,774 L2140,793 L2159,793" fill="none" stroke="#dcdcdc" stroke-width="1.8"/><rect x="2144" y="770" width="21" height="19" fill="none" stroke="#dcdcdc" stroke-width="1.8"/><path d="M2145,788 L2152,776 L2157,783 L2164,788 Z" fill="#dcdcdc"/><circle cx="2159" cy="775" r="2" fill="#dcdcdc"/><path d="M2145,825 C2140,834 2136,840 2136,844 C2136,850 2140,852 2145,852 C2146,852 2148,852 2149,851 C2147,848 2147,842 2149,840 Z" fill="#dcdcdc"/><circle cx="2161" cy="830" r="4" fill="#dcdcdc"/><circle cx="2158" cy="846" r="8" fill="none" stroke="#dcdcdc" stroke-width="2.4"/><circle cx="2150.1" cy="896" r="12.8" fill="none" stroke="#c86470" stroke-width="2.4"/><path d="M2136.5,909.3 L2140.2,905.8 M2160,885.6 L2163.6,882.4" stroke="#c86470" stroke-width="2.6"/><polygon points="2139.5,890.7 2142.2,885.8 2146.7,883.9 2146.3,886.2 2150.5,888.5 2152,890.3 2148.2,894.1 2144.5,895.3 2145.2,897.2 2142.2,897.5 2140.7,893.8" fill="#c86470"/><polygon points="2146,897.9 2154.3,897.9 2156.2,901 2152.8,905.9 2148.2,905.9 2147.1,901.3" fill="#c86470"/><rect x="2142" y="959.5" width="18" height="18" fill="#d08a4c"/><path d="M2136,960.5 L2136,954.5 L2142,954.5 M2160,954.5 L2166,954.5 L2166,960.5 M2166,976.5 L2166,982.5 L2160,982.5 M2142,982.5 L2136,982.5 L2136,976.5" stroke="#a87040" stroke-width="2" fill="none"/><path d="M2138,1036.5 L2152,1022.5" stroke="#6a9ad8" stroke-width="6" stroke-linecap="round"/><path d="M2150,1018.5 A10,10 0 0 1 2160,1010.5 L2156,1016.5 L2160,1022.5 L2166,1018.5 A10,10 0 0 1 2156,1028.5 Z" fill="#6a9ad8"/><circle cx="2141" cy="1071.5" r="5.5" fill="#6a9ad8"/><circle cx="2162" cy="1071.5" r="3.5" fill="#6a9ad8"/><circle cx="2141" cy="1091.5" r="3" fill="#6a9ad8"/><circle cx="2162" cy="1091.5" r="4" fill="#6a9ad8"/><path d="M2141,1071.5 L2162,1071.5 M2141,1071.5 L2141,1091.5 M2141,1071.5 L2162,1091.5" stroke="#6a9ad8" stroke-width="2.4"/><circle cx="2150" cy="1136.5" r="6" fill="#6a9ad8"/><path d="M2164,1142.5 A14,14 0 1 1 2160,1125.5" stroke="#6a9ad8" stroke-width="3" fill="none"/><circle cx="2161" cy="1126.5" r="3.5" fill="#6a9ad8"/><path d="M2139,1200.5 A11,11 0 0 1 2158,1180.5 L2164,1178.5 L2163,1186.5 A11,11 0 0 1 2145,1206.5 Z" fill="none" stroke="#6a9ad8" stroke-width="3"/><circle cx="2149" cy="1194.5" r="5" fill="none" stroke="#6a9ad8" stroke-width="3"/><path d="M2140,1236.5 L2163,1236.5 L2151,1261.5 Z" fill="none" stroke="#23b89a" stroke-width="2.4"/><rect x="2136" y="1232.5" width="7" height="7" fill="#2c2c2c" stroke="#23b89a" stroke-width="2"/><rect x="2159" y="1232.5" width="7" height="7" fill="#2c2c2c" stroke="#23b89a" stroke-width="2"/><rect x="2147.5" y="1257.5" width="7" height="7" fill="#2c2c2c" stroke="#23b89a" stroke-width="2"/><circle cx="2151" cy="1304.5" r="14" fill="#c86470"/><path d="M2137,1304.5 L2151,1304.5 L2151,1318.5 A14,14 0 0 1 2137,1304.5 Z" fill="#2c2c2c"/><path d="M2151,1304.5 L2165,1304.5 A14,14 0 0 1 2151,1318.5 Z" fill="#f0f0f0" fill-opacity="0.15"/><rect x="2137" y="1362" width="28" height="28" fill="#c86470"/><rect x="2138.0" y="1369.5" width="6.5" height="6.5" fill="#2c2c2c"/><rect x="2138.0" y="1382.5" width="6.5" height="6.5" fill="#2c2c2c"/><rect x="2144.5" y="1363.0" width="6.5" height="6.5" fill="#2c2c2c"/><rect x="2144.5" y="1376.0" width="6.5" height="6.5" fill="#2c2c2c"/><rect x="2151.0" y="1369.5" width="6.5" height="6.5" fill="#2c2c2c"/><rect x="2151.0" y="1382.5" width="6.5" height="6.5" fill="#2c2c2c"/><rect x="2157.5" y="1363.0" width="6.5" height="6.5" fill="#2c2c2c"/><rect x="2157.5" y="1376.0" width="6.5" height="6.5" fill="#2c2c2c"/></svg>
<div class="a" style="left:2176.0px;top:556.0px;width:381.0px;height:51.5px;background:#3d3d3d;"></div>
<div class="t" style="top:573.5px;font-size:17px;color:#e0e0e0;right:calc(100% - 2319.0px);">Render Engine</div>
<div class="a" style="left:2333.0px;top:569.0px;width:213.0px;height:24.5px;background:#282828;border-radius:6px;"></div>
<div class="t" style="top:573.5px;font-size:17px;color:#e6e6e6;left:2342.7px;">Eevee</div>
<div class="a" style="left:2176.0px;top:607.5px;width:381.0px;height:33.5px;background:#3d3d3d;"></div>
<div class="t" style="top:614.3px;font-size:19.5px;color:#e6e6e6;left:2207.0px;">Sampling</div>
<div class="t" style="top:657.6px;font-size:17px;color:#e0e0e0;right:calc(100% - 2319.0px);">Render</div>
<div class="t" style="top:685.0px;font-size:17px;color:#e0e0e0;right:calc(100% - 2319.0px);">Viewport</div>
<div class="a" style="left:2333.0px;top:655.0px;width:213.0px;height:24.0px;background:#595959;border-radius:6px 6px 0 0;"></div>
<div class="a" style="left:2333.0px;top:682.0px;width:213.0px;height:24.0px;background:#595959;border-radius:0 0 6px 6px;"></div>
<div class="t" style="top:657.6px;font-size:17px;color:#e6e6e6;left:2439.5px;transform:translateX(-50%);">64</div>
<div class="t" style="top:685.0px;font-size:17px;color:#e6e6e6;left:2439.5px;transform:translateX(-50%);">16</div>
<div class="t" style="top:721.4px;font-size:17px;color:#e6e6e6;left:2356.0px;">Viewport Denoising</div>
<div class="a" style="left:2176.0px;top:756.0px;width:381.0px;height:34.0px;background:#3d3d3d;"></div>
<div class="t" style="top:763.2px;font-size:19.5px;color:#e6e6e6;left:2228.0px;">Ambient Occlusion</div>
<div class="t" style="top:806.5px;font-size:17px;color:#e0e0e0;right:calc(100% - 2308.0px);">Distance</div>
<div class="a" style="left:2322.0px;top:804.0px;width:197.0px;height:25.0px;background:#595959;border-radius:6px;"></div>
<div class="t" style="top:806.5px;font-size:17px;color:#e6e6e6;left:2420.5px;transform:translateX(-50%);">2 m</div>
<div class="t" style="top:837.6px;font-size:17px;color:#e0e0e0;right:calc(100% - 2308.0px);">Factor</div>
<div class="a" style="left:2322.0px;top:835.0px;width:197.0px;height:24.0px;background:#5680c2;border-radius:6px;"></div>
<div class="t" style="top:837.6px;font-size:17px;color:#e6e6e6;left:2420.5px;transform:translateX(-50%);">1.00</div>
<div class="t" style="top:869.4px;font-size:17px;color:#e0e0e0;right:calc(100% - 2308.0px);">Trace Precision</div>
<div class="a" style="left:2322.0px;top:866.0px;width:197.0px;height:25.0px;background:#595959;border-radius:6px;"></div>
<div class="t" style="top:869.4px;font-size:17px;color:#e6e6e6;left:2420.5px;transform:translateX(-50%);">0.000</div>
<div class="t" style="top:901.5px;font-size:17px;color:#e6e6e6;left:2344.0px;">Bent Normals</div>
<div class="t" style="top:932.6px;font-size:17px;color:#e6e6e6;left:2344.0px;">Bounces Approximati...</div>
<div class="a" style="left:2176.0px;top:966.0px;width:381.0px;height:34.0px;background:#3d3d3d;"></div>
<div class="t" style="top:974.0px;font-size:19.5px;color:#e6e6e6;left:2229.0px;">Bloom</div>
<div class="a" style="left:2176.0px;top:1000.0px;width:381.0px;height:34.0px;background:#3d3d3d;"></div>
<div class="t" style="top:1008.9px;font-size:19.5px;color:#e6e6e6;left:2229.0px;">Screen Space Reflections</div>
<div class="a" style="left:2176.0px;top:1034.0px;width:381.0px;height:34.0px;background:#3d3d3d;"></div>
<div class="t" style="top:1043.0px;font-size:19.5px;color:#e6e6e6;left:2207.0px;">The Lightmapper</div>
<div class="a" style="left:2176.0px;top:1068.0px;width:381.0px;height:35.0px;background:#3d3d3d;"></div>
<div class="t" style="top:1077.1px;font-size:19.5px;color:#e6e6e6;left:2207.0px;">Indirect Lighting</div>
<div class="a" style="left:2189.0px;top:1116.0px;width:357.0px;height:24.0px;background:#545454;border-radius:6px;"></div>
<div class="t" style="top:1119.1px;font-size:17px;color:#e6e6e6;left:2380.0px;transform:translateX(-50%);">Bake Indirect Lighting</div>
<div class="a" style="left:2189.0px;top:1148.0px;width:357.0px;height:23.5px;background:#545454;border-radius:6px;"></div>
<div class="t" style="top:1151.3px;font-size:17px;color:#e6e6e6;left:2380.0px;transform:translateX(-50%);">Bake Cubemap Only</div>
<div class="a" style="left:2189.0px;top:1179.0px;width:357.0px;height:23.5px;background:#545454;border-radius:6px;"></div>
<div class="t" style="top:1182.4px;font-size:17px;color:#e6e6e6;left:2367.3px;transform:translateX(-50%);">Delete Lighting Cache</div>
<div class="t" style="top:1213.9px;font-size:17px;color:#e6e6e6;left:2192.8px;">1 Ref. Cubemaps, 100... (20.0 MiB in memory)</div>
<div class="t" style="top:1244.3px;font-size:17px;color:#e6e6e6;left:2354.0px;">Auto Bake</div>
<div class="t" style="top:1276.5px;font-size:17px;color:#e0e0e0;right:calc(100% - 2319.0px);">Diffuse Bounces</div>
<div class="a" style="left:2333.0px;top:1272.0px;width:214.0px;height:25.0px;background:#595959;border-radius:6px;"></div>
<div class="t" style="top:1276.5px;font-size:17px;color:#e6e6e6;left:2438.0px;transform:translateX(-50%);">1</div>
<div class="t" style="top:1306.9px;font-size:17px;color:#e0e0e0;right:calc(100% - 2319.0px);">Cubemap Size</div>
<div class="a" style="left:2333.0px;top:1303.0px;width:214.0px;height:26.0px;background:#282828;border-radius:6px;box-shadow:0 0 0 1px #303030;"></div>
<div class="t" style="top:1306.9px;font-size:17px;color:#e6e6e6;left:2342.0px;">512 px</div>
<div class="t" style="top:1338.3px;font-size:17px;color:#e0e0e0;right:calc(100% - 2319.0px);">Diffuse Occlusion</div>
<div class="a" style="left:2333.0px;top:1334.5px;width:214.0px;height:25.5px;background:#282828;border-radius:6px;box-shadow:0 0 0 1px #303030;"></div>
<div class="t" style="top:1338.3px;font-size:17px;color:#e6e6e6;left:2342.0px;">32 px</div>
<div class="t" style="top:1369.5px;font-size:17px;color:#e0e0e0;right:calc(100% - 2319.0px);">Irradiance Smoo...</div>
<div class="a" style="left:2333.0px;top:1365.6px;width:214.0px;height:24.7px;background:#595959;border-radius:6px;"></div>
<div class="a" style="left:2333.0px;top:1365.6px;width:16.5px;height:24.7px;background:#5680c2;border-radius:6px 0 0 6px;"></div>
<div class="t" style="top:1369.5px;font-size:17px;color:#e6e6e6;left:2438.0px;transform:translateX(-50%);">0.10</div>
<div class="t" style="top:1401.7px;font-size:17px;color:#e0e0e0;right:calc(100% - 2319.0px);">Clamp Glossy</div>
<div class="a" style="left:2333.0px;top:1397.0px;width:214.0px;height:25.5px;background:#595959;border-radius:6px;"></div>
<div class="t" style="top:1401.7px;font-size:17px;color:#e6e6e6;left:2438.0px;transform:translateX(-50%);">0.000</div>
<div class="t" style="top:1432.8px;font-size:17px;color:#e0e0e0;right:calc(100% - 2319.0px);">Filter Quality</div>
<div class="a" style="left:2333.0px;top:1428.6px;width:214.0px;height:24.7px;background:#595959;border-radius:6px;"></div>
<div class="t" style="top:1432.8px;font-size:17px;color:#e6e6e6;left:2438.0px;transform:translateX(-50%);">3.000</div>
<svg class="a" style="left:0;top:0;pointer-events:none" width="2560" height="1500"><polyline points="2532.5,579.75 2537,584.25 2541.5,579.75" fill="none" stroke="#e6e6e6" stroke-width="1.8"/><polygon points="2188,619.25 2198,619.25 2193,628.25" fill="#a0a0a0"/><rect x="2530" y="621.25" width="2" height="2" fill="#1e1e1e"/><rect x="2530" y="625.25" width="2" height="2" fill="#1e1e1e"/><rect x="2534" y="621.25" width="2" height="2" fill="#1e1e1e"/><rect x="2534" y="625.25" width="2" height="2" fill="#1e1e1e"/><rect x="2538" y="621.25" width="2" height="2" fill="#1e1e1e"/><rect x="2538" y="625.25" width="2" height="2" fill="#1e1e1e"/><rect x="2542" y="621.25" width="2" height="2" fill="#1e1e1e"/><rect x="2542" y="625.25" width="2" height="2" fill="#1e1e1e"/><rect x="2333" y="722" width="17" height="17" rx="3" fill="#5680c2"/><path d="M2336.5,731 L2340,734.5 L2346.5,726.5" stroke="#fff" stroke-width="2.4" fill="none"/><polygon points="2188,768.0 2198,768.0 2193,777.0" fill="#a0a0a0"/><rect x="2206" y="764.5" width="17" height="17" rx="3" fill="#5680c2"/><path d="M2209.5,773.5 L2213,777.0 L2219.5,769.0" stroke="#fff" stroke-width="2.4" fill="none"/><rect x="2530" y="770.0" width="2" height="2" fill="#1e1e1e"/><rect x="2530" y="774.0" width="2" height="2" fill="#1e1e1e"/><rect x="2534" y="770.0" width="2" height="2" fill="#1e1e1e"/><rect x="2534" y="774.0" width="2" height="2" fill="#1e1e1e"/><rect x="2538" y="770.0" width="2" height="2" fill="#1e1e1e"/><rect x="2538" y="774.0" width="2" height="2" fill="#1e1e1e"/><rect x="2542" y="770.0" width="2" height="2" fill="#1e1e1e"/><rect x="2542" y="774.0" width="2" height="2" fill="#1e1e1e"/><rect x="2322" y="901" width="16.5" height="16.5" rx="3" fill="#595959"/><rect x="2322" y="933" width="16.5" height="16.5" rx="3" fill="#595959"/><polygon points="2189,978.0 2197,983.0 2189,988.0" fill="#a0a0a0"/><rect x="2206" y="974.5" width="17" height="17" rx="3" fill="#595959"/><rect x="2530" y="980.0" width="2" height="2" fill="#1e1e1e"/><rect x="2530" y="984.0" width="2" height="2" fill="#1e1e1e"/><rect x="2534" y="980.0" width="2" height="2" fill="#1e1e1e"/><rect x="2534" y="984.0" width="2" height="2" fill="#1e1e1e"/><rect x="2538" y="980.0" width="2" height="2" fill="#1e1e1e"/><rect x="2538" y="984.0" width="2" height="2" fill="#1e1e1e"/><rect x="2542" y="980.0" width="2" height="2" fill="#1e1e1e"/><rect x="2542" y="984.0" width="2" height="2" fill="#1e1e1e"/><polygon points="2189,1012.0 2197,1017.0 2189,1022.0" fill="#a0a0a0"/><rect x="2206" y="1008.5" width="17" height="17" rx="3" fill="#595959"/><rect x="2530" y="1014.0" width="2" height="2" fill="#1e1e1e"/><rect x="2530" y="1018.0" width="2" height="2" fill="#1e1e1e"/><rect x="2534" y="1014.0" width="2" height="2" fill="#1e1e1e"/><rect x="2534" y="1018.0" width="2" height="2" fill="#1e1e1e"/><rect x="2538" y="1014.0" width="2" height="2" fill="#1e1e1e"/><rect x="2538" y="1018.0" width="2" height="2" fill="#1e1e1e"/><rect x="2542" y="1014.0" width="2" height="2" fill="#1e1e1e"/><rect x="2542" y="1018.0" width="2" height="2" fill="#1e1e1e"/><polygon points="2189,1046.0 2197,1051.0 2189,1056.0" fill="#a0a0a0"/><rect x="2530" y="1048.0" width="2" height="2" fill="#1e1e1e"/><rect x="2530" y="1052.0" width="2" height="2" fill="#1e1e1e"/><rect x="2534" y="1048.0" width="2" height="2" fill="#1e1e1e"/><rect x="2534" y="1052.0" width="2" height="2" fill="#1e1e1e"/><rect x="2538" y="1048.0" width="2" height="2" fill="#1e1e1e"/><rect x="2538" y="1052.0" width="2" height="2" fill="#1e1e1e"/><rect x="2542" y="1048.0" width="2" height="2" fill="#1e1e1e"/><rect x="2542" y="1052.0" width="2" height="2" fill="#1e1e1e"/><polygon points="2188,1080.5 2198,1080.5 2193,1089.5" fill="#a0a0a0"/><rect x="2530" y="1082.5" width="2" height="2" fill="#1e1e1e"/><rect x="2530" y="1086.5" width="2" height="2" fill="#1e1e1e"/><rect x="2534" y="1082.5" width="2" height="2" fill="#1e1e1e"/><rect x="2534" y="1086.5" width="2" height="2" fill="#1e1e1e"/><rect x="2538" y="1082.5" width="2" height="2" fill="#1e1e1e"/><rect x="2538" y="1086.5" width="2" height="2" fill="#1e1e1e"/><rect x="2542" y="1082.5" width="2" height="2" fill="#1e1e1e"/><rect x="2542" y="1086.5" width="2" height="2" fill="#1e1e1e"/><rect x="2195" y="1121" width="15" height="15" fill="none" stroke="#dcdcdc" stroke-width="1.8"/><path d="M2197,1119 L2207,1119 M2202,1125 L2214,1125 L2214,1131 L2204,1131" stroke="#dcdcdc" stroke-width="1.8" fill="none"/><path d="M2196,1156 L2201,1151 L2211,1151 L2211,1163 L2206,1168 L2196,1168 Z M2196,1156 L2206,1156 L2206,1168 M2206,1156 L2211,1151" stroke="#dcdcdc" stroke-width="1.6" fill="none"/><circle cx="2201" cy="1162" r="1.5" fill="#dcdcdc"/><rect x="2333" y="1245" width="16.5" height="16.5" rx="3" fill="#595959"/><polyline points="2532.5,1313.75 2537,1318.25 2541.5,1313.75" fill="none" stroke="#e6e6e6" stroke-width="1.8"/><polyline points="2532.5,1345.0 2537,1349.5 2541.5,1345.0" fill="none" stroke="#e6e6e6" stroke-width="1.8"/></svg>
</body></html>
